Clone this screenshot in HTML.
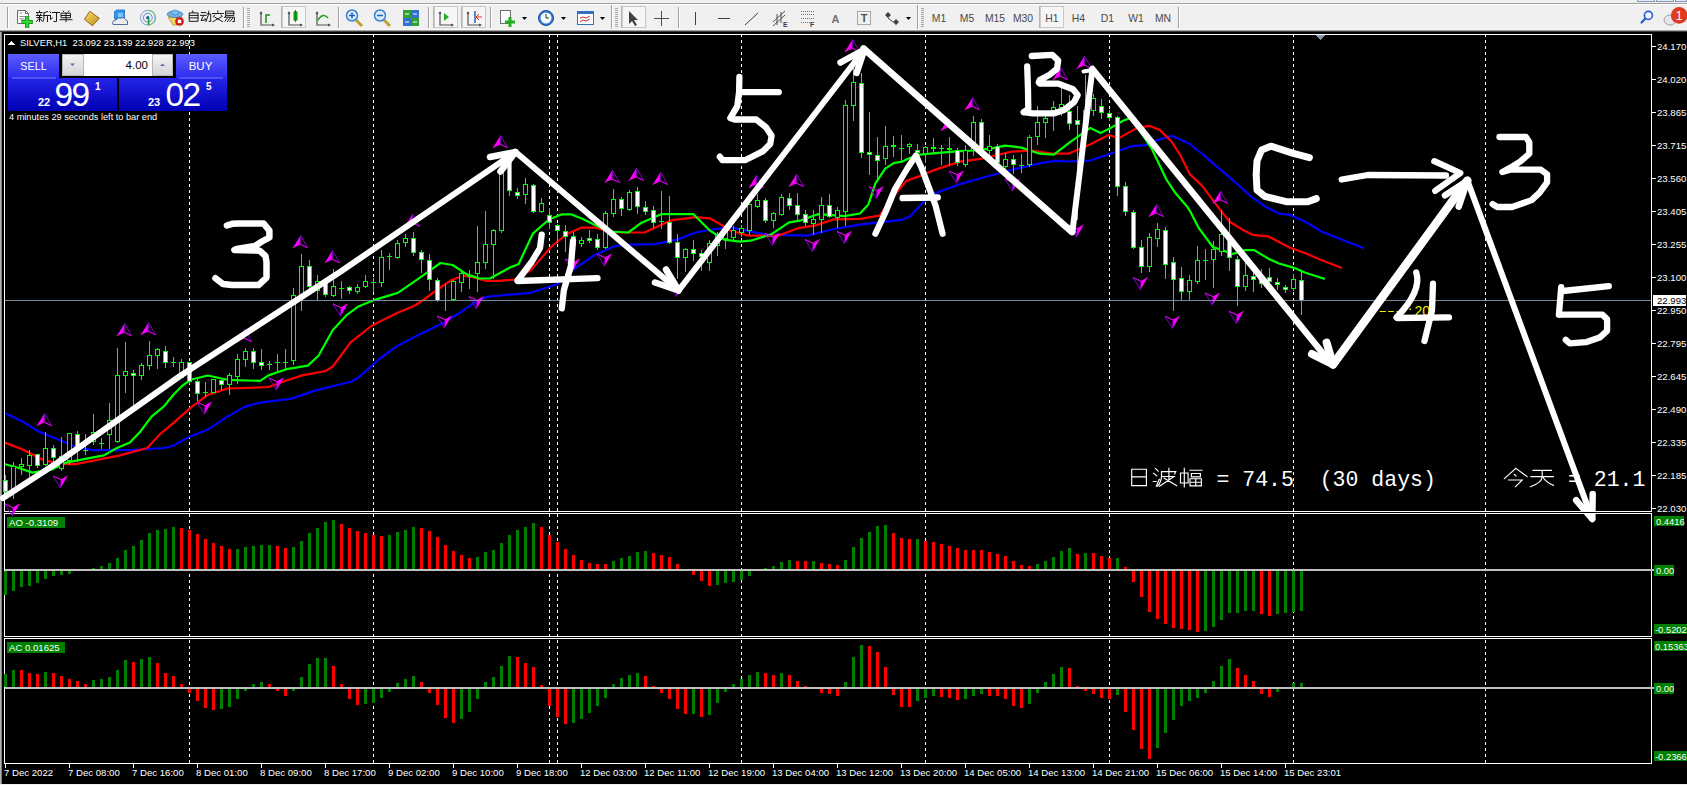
<!DOCTYPE html>
<html><head><meta charset="utf-8"><title>MT4</title>
<style>html,body{margin:0;padding:0;background:#000;overflow:hidden}svg{display:block}text{font-family:"Liberation Sans",sans-serif}.mono{font-family:"Liberation Mono",monospace}</style></head>
<body><svg width="1687" height="785" viewBox="0 0 1687 785">
<rect x="0" y="0" width="1687" height="3" fill="#f0f0f0"/>
<rect x="1637.5" y="-1" width="17" height="2.5" fill="#dcecfc" stroke="#8a9aaa" stroke-width="1"/>
<rect x="1656.5" y="-1" width="17" height="2.5" fill="#dcecfc" stroke="#8a9aaa" stroke-width="1"/>
<rect x="1675.5" y="-1" width="11" height="2.5" fill="#dcecfc" stroke="#8a9aaa" stroke-width="1"/>
<rect x="0" y="3" width="1687" height="1" fill="#a0a0a0"/>
<rect x="0" y="4" width="1687" height="1" fill="#ffffff"/>
<rect x="0" y="5" width="1687" height="24" fill="#f0f0f0"/>
<rect x="0" y="29" width="1687" height="1" fill="#f8f8f8"/>
<rect x="0" y="30" width="1687" height="1" fill="#a0a0a0"/>
<rect x="0" y="31" width="1687" height="1" fill="#404040"/>
<rect x="7" y="7" width="1" height="21" fill="#a0a0a0"/><rect x="8" y="7" width="1" height="21" fill="#ffffff"/>
<rect x="243" y="7" width="1" height="21" fill="#a0a0a0"/><rect x="244" y="7" width="1" height="21" fill="#ffffff"/>
<rect x="338" y="7" width="1" height="21" fill="#a0a0a0"/><rect x="339" y="7" width="1" height="21" fill="#ffffff"/>
<rect x="428" y="7" width="1" height="21" fill="#a0a0a0"/><rect x="429" y="7" width="1" height="21" fill="#ffffff"/>
<rect x="490" y="7" width="1" height="21" fill="#a0a0a0"/><rect x="491" y="7" width="1" height="21" fill="#ffffff"/>
<rect x="678" y="7" width="1" height="21" fill="#a0a0a0"/><rect x="679" y="7" width="1" height="21" fill="#ffffff"/>
<rect x="1178" y="7" width="1" height="21" fill="#a0a0a0"/><rect x="1179" y="7" width="1" height="21" fill="#ffffff"/>
<rect x="611" y="5" width="1" height="24" fill="#a0a0a0"/><rect x="612" y="5" width="1" height="24" fill="#ffffff"/>
<rect x="917" y="5" width="1" height="24" fill="#a0a0a0"/><rect x="918" y="5" width="1" height="24" fill="#ffffff"/>
<rect x="247" y="8" width="3" height="1" fill="#a8a8a8"/>
<rect x="247" y="10" width="3" height="1" fill="#a8a8a8"/>
<rect x="247" y="12" width="3" height="1" fill="#a8a8a8"/>
<rect x="247" y="14" width="3" height="1" fill="#a8a8a8"/>
<rect x="247" y="16" width="3" height="1" fill="#a8a8a8"/>
<rect x="247" y="18" width="3" height="1" fill="#a8a8a8"/>
<rect x="247" y="20" width="3" height="1" fill="#a8a8a8"/>
<rect x="247" y="22" width="3" height="1" fill="#a8a8a8"/>
<rect x="247" y="24" width="3" height="1" fill="#a8a8a8"/>
<rect x="247" y="26" width="3" height="1" fill="#a8a8a8"/>
<rect x="615" y="8" width="3" height="1" fill="#a8a8a8"/>
<rect x="615" y="10" width="3" height="1" fill="#a8a8a8"/>
<rect x="615" y="12" width="3" height="1" fill="#a8a8a8"/>
<rect x="615" y="14" width="3" height="1" fill="#a8a8a8"/>
<rect x="615" y="16" width="3" height="1" fill="#a8a8a8"/>
<rect x="615" y="18" width="3" height="1" fill="#a8a8a8"/>
<rect x="615" y="20" width="3" height="1" fill="#a8a8a8"/>
<rect x="615" y="22" width="3" height="1" fill="#a8a8a8"/>
<rect x="615" y="24" width="3" height="1" fill="#a8a8a8"/>
<rect x="615" y="26" width="3" height="1" fill="#a8a8a8"/>
<rect x="921" y="8" width="3" height="1" fill="#a8a8a8"/>
<rect x="921" y="10" width="3" height="1" fill="#a8a8a8"/>
<rect x="921" y="12" width="3" height="1" fill="#a8a8a8"/>
<rect x="921" y="14" width="3" height="1" fill="#a8a8a8"/>
<rect x="921" y="16" width="3" height="1" fill="#a8a8a8"/>
<rect x="921" y="18" width="3" height="1" fill="#a8a8a8"/>
<rect x="921" y="20" width="3" height="1" fill="#a8a8a8"/>
<rect x="921" y="22" width="3" height="1" fill="#a8a8a8"/>
<rect x="921" y="24" width="3" height="1" fill="#a8a8a8"/>
<rect x="921" y="26" width="3" height="1" fill="#a8a8a8"/>
<rect x="281.5" y="6.5" width="24" height="21" fill="#f6f6f6" stroke="#c8c8c8" stroke-width="1"/>
<rect x="281.5" y="6.5" width="1" height="21" fill="#a0a0a0"/>
<rect x="433.5" y="6.5" width="24" height="21" fill="#f6f6f6" stroke="#c8c8c8" stroke-width="1"/>
<rect x="433.5" y="6.5" width="1" height="21" fill="#a0a0a0"/>
<rect x="461.5" y="6.5" width="24" height="21" fill="#f6f6f6" stroke="#c8c8c8" stroke-width="1"/>
<rect x="461.5" y="6.5" width="1" height="21" fill="#a0a0a0"/>
<rect x="621.5" y="6.5" width="24" height="21" fill="#f6f6f6" stroke="#c8c8c8" stroke-width="1"/>
<rect x="621.5" y="6.5" width="1" height="21" fill="#a0a0a0"/>
<rect x="1039.5" y="6.5" width="24" height="21" fill="#f6f6f6" stroke="#c8c8c8" stroke-width="1"/>
<rect x="1039.5" y="6.5" width="1" height="21" fill="#a0a0a0"/>
<text x="939" y="22" font-size="10.4" text-anchor="middle" fill="#4a4a4a">M1</text>
<text x="967" y="22" font-size="10.4" text-anchor="middle" fill="#4a4a4a">M5</text>
<text x="995" y="22" font-size="10.4" text-anchor="middle" fill="#4a4a4a">M15</text>
<text x="1023" y="22" font-size="10.4" text-anchor="middle" fill="#4a4a4a">M30</text>
<text x="1052" y="22" font-size="10.4" text-anchor="middle" fill="#4a4a4a">H1</text>
<text x="1078.5" y="22" font-size="10.4" text-anchor="middle" fill="#4a4a4a">H4</text>
<text x="1107.5" y="22" font-size="10.4" text-anchor="middle" fill="#4a4a4a">D1</text>
<text x="1136" y="22" font-size="10.4" text-anchor="middle" fill="#4a4a4a">W1</text>
<text x="1163" y="22" font-size="10.4" text-anchor="middle" fill="#4a4a4a">MN</text>
<path d="M17.5 10.5h8l3 3v10h-11z" fill="#fafafa" stroke="#6a6a6a"/><path d="M25.5 10.5v3h3" fill="none" stroke="#6a6a6a"/>
<path d="M19.5 13h2.5M19.5 16.5h6M19.5 19h5" stroke="#8a8a8a"/>
<path d="M27.1 16.3v11.4M21.4 22h11.4" stroke="#0f8a0f" stroke-width="4.2"/><path d="M27.1 17v10M22 22h10" stroke="#34d834" stroke-width="2.4"/>
<defs><linearGradient id="gbook" x1="0" y1="0" x2="1" y2="1"><stop offset="0" stop-color="#f8e070"/><stop offset="1" stop-color="#c08a18"/></linearGradient></defs>
<path d="M84.4 19.3 L89.8 11.3 L99.4 18.3 L92.4 25.7 Z" fill="url(#gbook)" stroke="#8a5a10" stroke-width="0.9"/>
<path d="M114.5 11.5l2-1.5h8v9h-10z" fill="#2a9af0" stroke="#1a6ac0" stroke-width="0.8"/><path d="M118 14h5M118 16h5" stroke="#d8f0ff"/>
<path d="M113 24.5 q-1.5 -4 3 -4.5 q1.5 -3 5 -2 q3 -1.5 4.5 1.5 q3 0.5 2 5z" fill="#e8ecf4" stroke="#4a5a8a" stroke-width="0.9"/>
<circle cx="147.8" cy="17.7" r="7.3" fill="none" stroke="#7aa0e0" stroke-width="1"/><circle cx="147.8" cy="17.7" r="4.4" fill="none" stroke="#5a88d8" stroke-width="1"/><path d="M148 10.4 a7.3 7.3 0 0 1 0.6 14.6" fill="none" stroke="#80c080" stroke-width="1.2"/><circle cx="147.8" cy="17.7" r="1.6" fill="#2050c0"/><path d="M148.6 18v7.2" stroke="#20a020" stroke-width="1.6"/>
<path d="M168 17 h14 l-5 8 h-4z" fill="#f0d860" stroke="#b09020" stroke-width="0.8"/><ellipse cx="175" cy="14.3" rx="7.8" ry="3.2" fill="#70b0e8" stroke="#3a78b8" stroke-width="0.8"/><ellipse cx="175" cy="12.5" rx="3.5" ry="2.5" fill="#80c0f0" stroke="#3a78b8" stroke-width="0.6"/><circle cx="179.5" cy="21.4" r="4" fill="#d82010" stroke="#a01008" stroke-width="0.6"/><rect x="177.8" y="19.7" width="3.4" height="3.4" fill="#fff"/>
<path d="M261 12v13h13" fill="none" stroke="#505050" stroke-width="1.2"/><path d="M259.5 14l1.5-3 1.5 3M272 23.5l3 1.5-3 1.5" fill="#505050"/><path d="M266 23v-8h4" stroke="#109010" stroke-width="1.5" fill="none"/>
<path d="M289 12v13h13" fill="none" stroke="#505050" stroke-width="1.2"/><path d="M287.5 14l1.5-3 1.5 3M300 23.5l3 1.5-3 1.5" fill="#505050"/><rect x="294" y="12" width="3" height="8" fill="#20c020" stroke="#108010"/><path d="M295.5 10v12" stroke="#108010"/>
<path d="M317 12v13h13" fill="none" stroke="#505050" stroke-width="1.2"/><path d="M315.5 14l1.5-3 1.5 3M328 23.5l3 1.5-3 1.5" fill="#505050"/><path d="M318 20 q5 -8 10 -2" stroke="#20a020" stroke-width="1.5" fill="none"/>
<path d="M356 20 l6 6" stroke="#c0a030" stroke-width="3"/>
<circle cx="352" cy="15.5" r="5.5" fill="#d8ecfc" stroke="#3a80d0" stroke-width="1.5"/>
<path d="M349 15.5h6" stroke="#2060b0" stroke-width="1.5"/>
<path d="M352 12.5v6" stroke="#2060b0" stroke-width="1.5"/>
<path d="M384 20 l6 6" stroke="#c0a030" stroke-width="3"/>
<circle cx="380" cy="15.5" r="5.5" fill="#d8ecfc" stroke="#3a80d0" stroke-width="1.5"/>
<path d="M377 15.5h6" stroke="#2060b0" stroke-width="1.5"/>
<rect x="403" y="10" width="8" height="8" fill="#30a030"/><rect x="411" y="10" width="8" height="8" fill="#3070d0"/><rect x="403" y="18" width="8" height="8" fill="#3070d0"/><rect x="411" y="18" width="8" height="8" fill="#30a030"/>
<path d="M405 14h4M413 14h4M405 22h4M413 22h4" stroke="#fff"/>
<path d="M440 12v13h13" fill="none" stroke="#505050" stroke-width="1.2"/><path d="M438.5 14l1.5-3 1.5 3M451 23.5l3 1.5-3 1.5" fill="#505050"/><path d="M444 13 l5 4 -5 4z" fill="#20b020"/>
<path d="M468 12v13h13" fill="none" stroke="#505050" stroke-width="1.2"/><path d="M466.5 14l1.5-3 1.5 3M479 23.5l3 1.5-3 1.5" fill="#505050"/><path d="M475 11v12" stroke="#2060c0" stroke-width="1.5"/><path d="M482 17 h-5 M479 14 l-3 3 3 3" stroke="#e03010" fill="none"/>
<rect x="500.5" y="10.5" width="10" height="13" fill="#fafafa" stroke="#707070"/><path d="M510 17v10M505 22h10" stroke="#20b020" stroke-width="3"/>
<path d="M522 17h5l-2.5 3z" fill="#000"/>
<circle cx="546" cy="18" r="7.5" fill="#2a7ad8" stroke="#1a4a98"/><circle cx="546" cy="18" r="5.5" fill="#fafafa"/><path d="M546 14v4h3" stroke="#333" fill="none"/>
<path d="M561 17h5l-2.5 3z" fill="#000"/>
<rect x="577.5" y="11.5" width="16" height="13" fill="#fff" stroke="#3070c0"/><rect x="578" y="12" width="15" height="2" fill="#3070c0"/><path d="M580 18l3-1 3 1 4-2M580 22l3-2 3 1 4-2" stroke="#c03030" fill="none"/>
<path d="M600 17h5l-2.5 3z" fill="#000"/>
<path d="M629 11 v13 l3-3 3 5 2-1 -3-5 4 0z" fill="#404040"/>
<path d="M654 18.5h15M661.5 11v15" stroke="#505050"/>
<path d="M695.5 12v13" stroke="#404040"/>
<path d="M718 18.5h12" stroke="#404040"/>
<path d="M745 25 l13-12" stroke="#404040"/>
<path d="M773 22 l12-11 M773 26 l12-11 M777 14v11 M781 12v11" stroke="#505050"/><text x="783" y="27" font-size="7" font-weight="bold" fill="#404040">E</text>
<path d="M801 11.5h13M801 14.5h13M801 18.5h13M801 22.5h10" stroke="#707070" stroke-dasharray="1 1"/><text x="810" y="27" font-size="7" font-weight="bold" fill="#404040">F</text>
<text x="835.5" y="23" font-size="11" font-weight="bold" text-anchor="middle" fill="#707070">A</text>
<rect x="857.5" y="11.5" width="13" height="13" fill="none" stroke="#606060" stroke-dasharray="1 1"/><text x="864" y="22" font-size="11" font-weight="bold" text-anchor="middle" fill="#505050">T</text>
<path d="M885 15l3-3 3 3-3 3zM893 22l3-3 3 3-3 3z" fill="#404040"/><path d="M888 18l5 4" stroke="#404040"/>
<path d="M906 17h5l-2.5 3z" fill="#000"/>
<circle cx="1648.4" cy="15.4" r="4" fill="#f4f6ff" stroke="#2a5ad0" stroke-width="1.6"/><path d="M1645.5 18.5 l-4 4" stroke="#2a5ad0" stroke-width="2.2" stroke-linecap="round"/>
<ellipse cx="1670" cy="20" rx="6" ry="5" fill="#e4e4ea" stroke="#a0a0a0"/><circle cx="1679.2" cy="15.4" r="8.3" fill="#e03a20"/><text x="1679" y="20" font-size="12" text-anchor="middle" fill="#fff" font-family="'Liberation Serif', serif">1</text>
<g stroke="#1a1a1a" stroke-width="1" fill="none" stroke-linecap="square">
<path d="M39.5 11v1.2M36.5 12.5h5.5M37.5 13.8l.6 1M41 13.8l-.6 1M36.5 15.5h5.5M36.8 17.5h5M39.5 15.5v6M39 18.5l-2.5 3M40 18.5l2 2.5"/>
<path d="M47.5 11.5l-3.5 1.3M44 12.8v5.5l-1 3M43.5 15.5h6.5M47.5 15.5v6"/>
<path d="M50 11.8l.8 1M50.5 15.5v4l1.8-1.5M52.5 12.5h7M56.5 12.5v9h-2.5"/>
<path d="M63 11l.8 1M69 11l-.8 1M61.5 13.2h9v4.5h-9zM61.5 15.5h9M66 13.2v8.5M60 19.7h12"/>
<path d="M192.5 11l.5 1.5M189.7 12.9h8.3v8.4h-8.3zM189.7 15.4h8.3M189.7 17.9h8.3"/>
<path d="M201.4 12.6h4.3M200.5 15.4h5.5M203.3 16l-2.2 4.6l4.5-.8M205 18.5l.8 1.5M207 13.9h3.7v7.5h-1.5M208.8 11.2l-.5 4-2.3 6.2"/>
<path d="M217.8 11v1.2M212.5 13.5h10.8M214.5 15l-1 1.3M221 15l1 1.3M214 16.8l8.5 4.8M221.5 16.8l-8.5 4.8"/>
<path d="M226 11.1h7.8v4.3h-7.8zM226 13.2h7.8M226.5 15.4l-1.7 2M224.8 17.2h9.6v4.4h-1.5M228 17.2l-3 4M230.5 17.5l-3 4M233 17.8l-3 3.7"/>
</g>
<rect x="0" y="32" width="1687" height="753" fill="#000"/>
<rect x="0" y="32" width="1" height="753" fill="#b0b0b0"/><rect x="1" y="32" width="1" height="753" fill="#808080"/><rect x="0" y="784" width="1687" height="1" fill="#f0f0f0"/>
<rect x="4.5" y="34.5" width="1647" height="477" fill="none" stroke="#fff" stroke-width="1"/>
<rect x="4.5" y="513.5" width="1647" height="123" fill="none" stroke="#fff" stroke-width="1"/>
<rect x="4.5" y="638.5" width="1647" height="125" fill="none" stroke="#fff" stroke-width="1"/>
<g shape-rendering="crispEdges"><line x1="189.5" y1="35" x2="189.5" y2="511" stroke="#fff" stroke-width="1" stroke-dasharray="3 3" stroke-dashoffset="1"/>
<line x1="189.5" y1="514" x2="189.5" y2="636" stroke="#fff" stroke-width="1" stroke-dasharray="3 3" stroke-dashoffset="0"/>
<line x1="189.5" y1="639" x2="189.5" y2="763" stroke="#fff" stroke-width="1" stroke-dasharray="3 3" stroke-dashoffset="5"/>
<line x1="373.5" y1="35" x2="373.5" y2="511" stroke="#fff" stroke-width="1" stroke-dasharray="3 3" stroke-dashoffset="1"/>
<line x1="373.5" y1="514" x2="373.5" y2="636" stroke="#fff" stroke-width="1" stroke-dasharray="3 3" stroke-dashoffset="0"/>
<line x1="373.5" y1="639" x2="373.5" y2="763" stroke="#fff" stroke-width="1" stroke-dasharray="3 3" stroke-dashoffset="5"/>
<line x1="549.5" y1="35" x2="549.5" y2="511" stroke="#fff" stroke-width="1" stroke-dasharray="3 3" stroke-dashoffset="1"/>
<line x1="549.5" y1="514" x2="549.5" y2="636" stroke="#fff" stroke-width="1" stroke-dasharray="3 3" stroke-dashoffset="0"/>
<line x1="549.5" y1="639" x2="549.5" y2="763" stroke="#fff" stroke-width="1" stroke-dasharray="3 3" stroke-dashoffset="5"/>
<line x1="557.5" y1="35" x2="557.5" y2="511" stroke="#fff" stroke-width="1" stroke-dasharray="3 3" stroke-dashoffset="1"/>
<line x1="557.5" y1="514" x2="557.5" y2="636" stroke="#fff" stroke-width="1" stroke-dasharray="3 3" stroke-dashoffset="0"/>
<line x1="557.5" y1="639" x2="557.5" y2="763" stroke="#fff" stroke-width="1" stroke-dasharray="3 3" stroke-dashoffset="5"/>
<line x1="741.5" y1="35" x2="741.5" y2="511" stroke="#fff" stroke-width="1" stroke-dasharray="3 3" stroke-dashoffset="1"/>
<line x1="741.5" y1="514" x2="741.5" y2="636" stroke="#fff" stroke-width="1" stroke-dasharray="3 3" stroke-dashoffset="0"/>
<line x1="741.5" y1="639" x2="741.5" y2="763" stroke="#fff" stroke-width="1" stroke-dasharray="3 3" stroke-dashoffset="5"/>
<line x1="925.5" y1="35" x2="925.5" y2="511" stroke="#fff" stroke-width="1" stroke-dasharray="3 3" stroke-dashoffset="1"/>
<line x1="925.5" y1="514" x2="925.5" y2="636" stroke="#fff" stroke-width="1" stroke-dasharray="3 3" stroke-dashoffset="0"/>
<line x1="925.5" y1="639" x2="925.5" y2="763" stroke="#fff" stroke-width="1" stroke-dasharray="3 3" stroke-dashoffset="5"/>
<line x1="1109.5" y1="35" x2="1109.5" y2="511" stroke="#fff" stroke-width="1" stroke-dasharray="3 3" stroke-dashoffset="1"/>
<line x1="1109.5" y1="514" x2="1109.5" y2="636" stroke="#fff" stroke-width="1" stroke-dasharray="3 3" stroke-dashoffset="0"/>
<line x1="1109.5" y1="639" x2="1109.5" y2="763" stroke="#fff" stroke-width="1" stroke-dasharray="3 3" stroke-dashoffset="5"/>
<line x1="1293.5" y1="35" x2="1293.5" y2="511" stroke="#fff" stroke-width="1" stroke-dasharray="3 3" stroke-dashoffset="1"/>
<line x1="1293.5" y1="514" x2="1293.5" y2="636" stroke="#fff" stroke-width="1" stroke-dasharray="3 3" stroke-dashoffset="0"/>
<line x1="1293.5" y1="639" x2="1293.5" y2="763" stroke="#fff" stroke-width="1" stroke-dasharray="3 3" stroke-dashoffset="5"/>
<line x1="1485.5" y1="35" x2="1485.5" y2="511" stroke="#fff" stroke-width="1" stroke-dasharray="3 3" stroke-dashoffset="1"/>
<line x1="1485.5" y1="514" x2="1485.5" y2="636" stroke="#fff" stroke-width="1" stroke-dasharray="3 3" stroke-dashoffset="0"/>
<line x1="1485.5" y1="639" x2="1485.5" y2="763" stroke="#fff" stroke-width="1" stroke-dasharray="3 3" stroke-dashoffset="5"/></g>
<g clip-path="url(#cmain)">
<path d="M5.0 413.2 L21.6 420.9 L39.0 431.7 L60.6 440.4 L75.8 447.0 L93.0 450.2 L130.0 450.2 L164.5 448.0 L173.2 445.8 L188.3 437.2 L207.8 429.6 L227.3 416.6 L244.6 406.9 L260.0 402.6 L291.7 398.6 L314.9 390.6 L350.6 381.7 L357.7 378.1 L380.0 358.5 L396.6 346.4 L418.2 335.0 L441.1 324.1 L459.0 313.3 L475.5 301.8 L487.0 296.8 L500.0 295.5 L530.7 292.8 L558.2 283.8 L575.0 268.3 L594.6 255.0 L615.0 246.0 L630.4 244.7 L654.8 244.1 L677.2 239.6 L695.6 232.5 L711.9 229.5 L730.0 227.4 L766.7 234.6 L807.4 235.6 L831.9 229.5 L860.0 224.7 L876.8 222.6 L902.0 219.8 L910.4 216.3 L923.0 202.3 L937.0 192.5 L960.0 184.1 L980.6 178.2 L1011.1 170.0 L1041.7 162.9 L1056.0 160.9 L1070.0 161.5 L1090.4 160.5 L1114.8 152.3 L1131.1 146.2 L1145.4 145.2 L1157.6 140.1 L1171.7 135.7 L1189.0 143.5 L1202.2 153.8 L1220.6 169.8 L1235.9 182.8 L1251.2 196.6 L1266.5 207.3 L1278.7 213.4 L1290.0 215.0 L1305.5 221.8 L1322.3 232.0 L1364.0 248.3" fill="none" stroke="#0000ff" stroke-width="2.2" stroke-linejoin="round"/>
<path d="M5.0 442.6 L21.6 449.0 L43.3 459.9 L60.6 464.2 L75.8 464.2 L97.4 459.9 L119.0 455.6 L147.2 448.0 L160.2 434.0 L173.2 423.1 L190.5 407.9 L207.8 394.9 L227.3 388.5 L260.0 387.4 L268.5 387.0 L282.8 381.7 L302.4 375.4 L325.6 371.0 L332.8 366.5 L350.6 342.4 L372.0 325.5 L380.0 321.6 L396.6 313.3 L414.4 305.7 L423.3 300.0 L437.3 289.7 L451.3 280.2 L462.8 275.7 L471.7 277.0 L485.7 280.8 L500.0 280.8 L514.4 279.6 L530.7 270.4 L551.0 247.0 L567.4 233.7 L581.7 227.6 L596.0 227.6 L608.2 231.7 L622.2 232.5 L644.6 232.5 L671.1 220.3 L695.6 217.2 L709.8 218.3 L724.1 226.4 L730.0 230.5 L748.3 235.6 L778.9 235.6 L797.2 228.4 L815.6 225.4 L833.9 219.3 L860.0 218.8 L879.6 215.6 L893.6 196.0 L906.2 181.0 L918.8 176.4 L934.2 170.1 L946.8 165.9 L960.0 161.7 L980.6 158.8 L1011.1 151.7 L1031.5 150.7 L1051.9 153.7 L1068.2 153.7 L1090.4 144.2 L1108.7 135.0 L1118.9 138.1 L1137.2 127.9 L1149.5 125.8 L1159.6 129.9 L1171.5 141.5 L1180.0 154.6 L1190.0 174.4 L1202.2 185.9 L1211.4 198.1 L1220.6 210.3 L1229.8 221.8 L1243.5 230.2 L1252.7 234.8 L1268.0 236.3 L1290.0 247.8 L1305.5 253.3 L1320.0 259.4 L1342.0 268.0" fill="none" stroke="#ff0000" stroke-width="2.2" stroke-linejoin="round"/>
<path d="M5.0 464.3 L17.3 467.5 L32.5 472.6 L52.0 469.4 L65.0 462.9 L86.6 458.6 L103.9 455.4 L116.9 448.0 L129.9 442.6 L140.0 432.0 L151.5 416.6 L164.5 405.8 L173.2 395.0 L182.0 386.0 L190.5 379.8 L207.8 375.5 L227.3 379.8 L260.0 380.9 L268.5 375.4 L286.4 369.2 L307.8 365.6 L318.5 355.8 L332.8 330.0 L347.0 314.8 L357.7 306.8 L375.6 299.6 L397.8 292.9 L418.2 278.9 L440.4 263.0 L452.6 265.0 L466.9 274.3 L479.0 278.4 L490.0 278.5 L510.4 267.3 L518.5 264.3 L532.8 233.7 L549.0 219.5 L561.3 214.4 L571.5 214.4 L581.7 218.4 L596.0 225.6 L610.0 231.5 L628.3 232.5 L640.6 223.3 L661.0 214.2 L693.5 214.2 L709.8 230.5 L724.1 239.6 L740.0 241.7 L750.4 240.7 L770.7 234.6 L789.1 222.3 L801.3 220.3 L817.6 214.2 L831.9 215.2 L844.1 216.2 L860.0 213.5 L868.4 204.4 L875.4 183.4 L885.2 168.7 L893.6 163.1 L902.0 161.7 L909.0 158.2 L920.2 154.7 L932.8 153.3 L960.0 151.2 L970.4 150.7 L990.7 148.6 L1005.0 145.6 L1021.3 147.6 L1039.6 153.7 L1053.9 154.7 L1070.0 142.1 L1090.4 127.9 L1100.6 133.0 L1110.7 127.9 L1123.0 120.7 L1131.1 117.7 L1151.5 148.3 L1166.7 180.0 L1174.8 192.2 L1187.0 206.5 L1190.0 211.1 L1199.2 228.7 L1212.9 247.0 L1232.8 253.9 L1245.0 250.1 L1254.2 250.1 L1269.5 259.3 L1279.0 263.5 L1293.3 267.6 L1305.5 272.7 L1325.0 279.0" fill="none" stroke="#00ff00" stroke-width="2.2" stroke-linejoin="round"/>
</g>
<g clip-path="url(#cmain)" shape-rendering="crispEdges">
<rect x="5" y="475" width="1" height="23" fill="#00ff00"/>
<rect x="3" y="480" width="5" height="12" fill="#00ff00"/>
<rect x="4" y="481" width="3" height="10" fill="#ffffff"/>
<rect x="13" y="462" width="1" height="37" fill="#00ff00"/>
<rect x="11" y="466" width="5" height="25" fill="#00ff00"/>
<rect x="12" y="467" width="3" height="23" fill="#000000"/>
<rect x="21" y="458" width="1" height="17" fill="#00ff00"/>
<rect x="19" y="464" width="5" height="3" fill="#00ff00"/>
<rect x="20" y="465" width="3" height="1" fill="#000000"/>
<rect x="29" y="450" width="1" height="27" fill="#00ff00"/>
<rect x="27" y="455" width="5" height="11" fill="#00ff00"/>
<rect x="28" y="456" width="3" height="9" fill="#000000"/>
<rect x="37" y="454" width="1" height="14" fill="#00ff00"/>
<rect x="35" y="454" width="5" height="12" fill="#00ff00"/>
<rect x="36" y="455" width="3" height="10" fill="#ffffff"/>
<rect x="45" y="432" width="1" height="34" fill="#00ff00"/>
<rect x="43" y="448" width="5" height="17" fill="#00ff00"/>
<rect x="44" y="449" width="3" height="15" fill="#000000"/>
<rect x="53" y="445" width="1" height="17" fill="#00ff00"/>
<rect x="51" y="448" width="5" height="10" fill="#00ff00"/>
<rect x="52" y="449" width="3" height="8" fill="#ffffff"/>
<rect x="61" y="437" width="1" height="34" fill="#00ff00"/>
<rect x="59" y="456" width="5" height="13" fill="#00ff00"/>
<rect x="60" y="457" width="3" height="11" fill="#000000"/>
<rect x="69" y="433" width="1" height="32" fill="#00ff00"/>
<rect x="67" y="433" width="5" height="28" fill="#00ff00"/>
<rect x="68" y="434" width="3" height="26" fill="#000000"/>
<rect x="77" y="431" width="1" height="31" fill="#00ff00"/>
<rect x="75" y="434" width="5" height="13" fill="#00ff00"/>
<rect x="76" y="435" width="3" height="11" fill="#ffffff"/>
<rect x="85" y="434" width="1" height="21" fill="#00ff00"/>
<rect x="83" y="450" width="5" height="1" fill="#00ff00"/>
<rect x="93" y="414" width="1" height="31" fill="#00ff00"/>
<rect x="91" y="432" width="5" height="10" fill="#00ff00"/>
<rect x="92" y="433" width="3" height="8" fill="#000000"/>
<rect x="101" y="438" width="1" height="11" fill="#00ff00"/>
<rect x="99" y="443" width="5" height="1" fill="#00ff00"/>
<rect x="109" y="403" width="1" height="46" fill="#00ff00"/>
<rect x="107" y="420" width="5" height="15" fill="#00ff00"/>
<rect x="108" y="421" width="3" height="13" fill="#000000"/>
<rect x="117" y="348" width="1" height="95" fill="#00ff00"/>
<rect x="115" y="375" width="5" height="67" fill="#00ff00"/>
<rect x="116" y="376" width="3" height="65" fill="#000000"/>
<rect x="125" y="342" width="1" height="51" fill="#00ff00"/>
<rect x="123" y="371" width="5" height="5" fill="#00ff00"/>
<rect x="124" y="372" width="3" height="3" fill="#000000"/>
<rect x="133" y="370" width="1" height="38" fill="#00ff00"/>
<rect x="131" y="373" width="5" height="3" fill="#00ff00"/>
<rect x="132" y="374" width="3" height="1" fill="#ffffff"/>
<rect x="141" y="363" width="1" height="17" fill="#00ff00"/>
<rect x="139" y="365" width="5" height="11" fill="#00ff00"/>
<rect x="140" y="366" width="3" height="9" fill="#000000"/>
<rect x="149" y="341" width="1" height="29" fill="#00ff00"/>
<rect x="147" y="355" width="5" height="11" fill="#00ff00"/>
<rect x="148" y="356" width="3" height="9" fill="#000000"/>
<rect x="157" y="348" width="1" height="21" fill="#00ff00"/>
<rect x="155" y="349" width="5" height="7" fill="#00ff00"/>
<rect x="156" y="350" width="3" height="5" fill="#000000"/>
<rect x="165" y="346" width="1" height="22" fill="#00ff00"/>
<rect x="163" y="351" width="5" height="12" fill="#00ff00"/>
<rect x="164" y="352" width="3" height="10" fill="#ffffff"/>
<rect x="173" y="357" width="1" height="10" fill="#00ff00"/>
<rect x="171" y="362" width="5" height="1" fill="#00ff00"/>
<rect x="181" y="359" width="1" height="19" fill="#00ff00"/>
<rect x="179" y="362" width="5" height="16" fill="#00ff00"/>
<rect x="180" y="363" width="3" height="14" fill="#000000"/>
<rect x="189" y="362" width="1" height="22" fill="#00ff00"/>
<rect x="187" y="362" width="5" height="20" fill="#00ff00"/>
<rect x="188" y="363" width="3" height="18" fill="#ffffff"/>
<rect x="197" y="377" width="1" height="24" fill="#00ff00"/>
<rect x="195" y="381" width="5" height="13" fill="#00ff00"/>
<rect x="196" y="382" width="3" height="11" fill="#ffffff"/>
<rect x="205" y="382" width="1" height="15" fill="#00ff00"/>
<rect x="203" y="392" width="5" height="1" fill="#00ff00"/>
<rect x="213" y="379" width="1" height="14" fill="#00ff00"/>
<rect x="211" y="379" width="5" height="14" fill="#00ff00"/>
<rect x="212" y="380" width="3" height="12" fill="#000000"/>
<rect x="221" y="378" width="1" height="12" fill="#00ff00"/>
<rect x="219" y="380" width="5" height="5" fill="#00ff00"/>
<rect x="220" y="381" width="3" height="3" fill="#ffffff"/>
<rect x="229" y="373" width="1" height="22" fill="#00ff00"/>
<rect x="227" y="375" width="5" height="10" fill="#00ff00"/>
<rect x="228" y="376" width="3" height="8" fill="#000000"/>
<rect x="237" y="354" width="1" height="30" fill="#00ff00"/>
<rect x="235" y="359" width="5" height="18" fill="#00ff00"/>
<rect x="236" y="360" width="3" height="16" fill="#000000"/>
<rect x="245" y="348" width="1" height="19" fill="#00ff00"/>
<rect x="243" y="351" width="5" height="9" fill="#00ff00"/>
<rect x="244" y="352" width="3" height="7" fill="#000000"/>
<rect x="253" y="348" width="1" height="21" fill="#00ff00"/>
<rect x="251" y="351" width="5" height="12" fill="#00ff00"/>
<rect x="252" y="352" width="3" height="10" fill="#ffffff"/>
<rect x="261" y="349" width="1" height="21" fill="#00ff00"/>
<rect x="259" y="362" width="5" height="4" fill="#00ff00"/>
<rect x="260" y="363" width="3" height="2" fill="#ffffff"/>
<rect x="269" y="361" width="1" height="9" fill="#00ff00"/>
<rect x="267" y="364" width="5" height="1" fill="#00ff00"/>
<rect x="277" y="354" width="1" height="19" fill="#00ff00"/>
<rect x="275" y="362" width="5" height="1" fill="#00ff00"/>
<rect x="285" y="349" width="1" height="20" fill="#00ff00"/>
<rect x="283" y="362" width="5" height="1" fill="#00ff00"/>
<rect x="293" y="288" width="1" height="77" fill="#00ff00"/>
<rect x="291" y="295" width="5" height="66" fill="#00ff00"/>
<rect x="292" y="296" width="3" height="64" fill="#000000"/>
<rect x="301" y="254" width="1" height="57" fill="#00ff00"/>
<rect x="299" y="266" width="5" height="31" fill="#00ff00"/>
<rect x="300" y="267" width="3" height="29" fill="#000000"/>
<rect x="309" y="260" width="1" height="29" fill="#00ff00"/>
<rect x="307" y="266" width="5" height="21" fill="#00ff00"/>
<rect x="308" y="267" width="3" height="19" fill="#ffffff"/>
<rect x="317" y="275" width="1" height="26" fill="#00ff00"/>
<rect x="315" y="281" width="5" height="10" fill="#00ff00"/>
<rect x="316" y="282" width="3" height="8" fill="#000000"/>
<rect x="325" y="278" width="1" height="19" fill="#00ff00"/>
<rect x="323" y="283" width="5" height="12" fill="#00ff00"/>
<rect x="324" y="284" width="3" height="10" fill="#ffffff"/>
<rect x="333" y="269" width="1" height="28" fill="#00ff00"/>
<rect x="331" y="286" width="5" height="10" fill="#00ff00"/>
<rect x="332" y="287" width="3" height="8" fill="#000000"/>
<rect x="341" y="281" width="1" height="18" fill="#00ff00"/>
<rect x="339" y="288" width="5" height="1" fill="#00ff00"/>
<rect x="349" y="286" width="1" height="8" fill="#00ff00"/>
<rect x="347" y="287" width="5" height="4" fill="#00ff00"/>
<rect x="348" y="288" width="3" height="2" fill="#ffffff"/>
<rect x="357" y="284" width="1" height="10" fill="#00ff00"/>
<rect x="355" y="287" width="5" height="5" fill="#00ff00"/>
<rect x="356" y="288" width="3" height="3" fill="#000000"/>
<rect x="365" y="275" width="1" height="13" fill="#00ff00"/>
<rect x="363" y="281" width="5" height="6" fill="#00ff00"/>
<rect x="364" y="282" width="3" height="4" fill="#000000"/>
<rect x="373" y="278" width="1" height="14" fill="#00ff00"/>
<rect x="371" y="282" width="5" height="1" fill="#00ff00"/>
<rect x="381" y="250" width="1" height="37" fill="#00ff00"/>
<rect x="379" y="257" width="5" height="26" fill="#00ff00"/>
<rect x="380" y="258" width="3" height="24" fill="#000000"/>
<rect x="389" y="253" width="1" height="17" fill="#00ff00"/>
<rect x="387" y="256" width="5" height="1" fill="#00ff00"/>
<rect x="397" y="240" width="1" height="19" fill="#00ff00"/>
<rect x="395" y="243" width="5" height="15" fill="#00ff00"/>
<rect x="396" y="244" width="3" height="13" fill="#000000"/>
<rect x="405" y="234" width="1" height="13" fill="#00ff00"/>
<rect x="403" y="238" width="5" height="5" fill="#00ff00"/>
<rect x="404" y="239" width="3" height="3" fill="#000000"/>
<rect x="413" y="232" width="1" height="24" fill="#00ff00"/>
<rect x="411" y="238" width="5" height="15" fill="#00ff00"/>
<rect x="412" y="239" width="3" height="13" fill="#ffffff"/>
<rect x="421" y="250" width="1" height="23" fill="#00ff00"/>
<rect x="419" y="252" width="5" height="8" fill="#00ff00"/>
<rect x="420" y="253" width="3" height="6" fill="#ffffff"/>
<rect x="429" y="254" width="1" height="37" fill="#00ff00"/>
<rect x="427" y="260" width="5" height="20" fill="#00ff00"/>
<rect x="428" y="261" width="3" height="18" fill="#ffffff"/>
<rect x="437" y="278" width="1" height="24" fill="#00ff00"/>
<rect x="435" y="280" width="5" height="21" fill="#00ff00"/>
<rect x="436" y="281" width="3" height="19" fill="#ffffff"/>
<rect x="445" y="284" width="1" height="27" fill="#00ff00"/>
<rect x="443" y="300" width="5" height="1" fill="#00ff00"/>
<rect x="453" y="280" width="1" height="21" fill="#00ff00"/>
<rect x="451" y="281" width="5" height="19" fill="#00ff00"/>
<rect x="452" y="282" width="3" height="17" fill="#000000"/>
<rect x="461" y="270" width="1" height="22" fill="#00ff00"/>
<rect x="459" y="273" width="5" height="10" fill="#00ff00"/>
<rect x="460" y="274" width="3" height="8" fill="#000000"/>
<rect x="469" y="270" width="1" height="19" fill="#00ff00"/>
<rect x="467" y="276" width="5" height="1" fill="#00ff00"/>
<rect x="477" y="226" width="1" height="66" fill="#00ff00"/>
<rect x="475" y="262" width="5" height="12" fill="#00ff00"/>
<rect x="476" y="263" width="3" height="10" fill="#000000"/>
<rect x="485" y="211" width="1" height="58" fill="#00ff00"/>
<rect x="483" y="244" width="5" height="19" fill="#00ff00"/>
<rect x="484" y="245" width="3" height="17" fill="#000000"/>
<rect x="493" y="229" width="1" height="50" fill="#00ff00"/>
<rect x="491" y="230" width="5" height="15" fill="#00ff00"/>
<rect x="492" y="231" width="3" height="13" fill="#000000"/>
<rect x="501" y="154" width="1" height="79" fill="#00ff00"/>
<rect x="499" y="170" width="5" height="61" fill="#00ff00"/>
<rect x="500" y="171" width="3" height="59" fill="#000000"/>
<rect x="509" y="158" width="1" height="38" fill="#00ff00"/>
<rect x="507" y="162" width="5" height="29" fill="#00ff00"/>
<rect x="508" y="163" width="3" height="27" fill="#ffffff"/>
<rect x="517" y="188" width="1" height="11" fill="#00ff00"/>
<rect x="515" y="192" width="5" height="4" fill="#00ff00"/>
<rect x="516" y="193" width="3" height="2" fill="#ffffff"/>
<rect x="525" y="178" width="1" height="26" fill="#00ff00"/>
<rect x="523" y="184" width="5" height="11" fill="#00ff00"/>
<rect x="524" y="185" width="3" height="9" fill="#000000"/>
<rect x="533" y="184" width="1" height="29" fill="#00ff00"/>
<rect x="531" y="185" width="5" height="27" fill="#00ff00"/>
<rect x="532" y="186" width="3" height="25" fill="#ffffff"/>
<rect x="541" y="198" width="1" height="15" fill="#00ff00"/>
<rect x="539" y="203" width="5" height="9" fill="#00ff00"/>
<rect x="540" y="204" width="3" height="7" fill="#000000"/>
<rect x="549" y="208" width="1" height="21" fill="#00ff00"/>
<rect x="547" y="215" width="5" height="8" fill="#00ff00"/>
<rect x="548" y="216" width="3" height="6" fill="#ffffff"/>
<rect x="557" y="224" width="1" height="19" fill="#00ff00"/>
<rect x="555" y="225" width="5" height="6" fill="#00ff00"/>
<rect x="556" y="226" width="3" height="4" fill="#ffffff"/>
<rect x="565" y="225" width="1" height="27" fill="#00ff00"/>
<rect x="563" y="231" width="5" height="6" fill="#00ff00"/>
<rect x="564" y="232" width="3" height="4" fill="#ffffff"/>
<rect x="573" y="232" width="1" height="22" fill="#00ff00"/>
<rect x="571" y="236" width="5" height="9" fill="#00ff00"/>
<rect x="572" y="237" width="3" height="7" fill="#ffffff"/>
<rect x="581" y="237" width="1" height="10" fill="#00ff00"/>
<rect x="579" y="240" width="5" height="4" fill="#00ff00"/>
<rect x="580" y="241" width="3" height="2" fill="#000000"/>
<rect x="589" y="230" width="1" height="13" fill="#00ff00"/>
<rect x="587" y="238" width="5" height="3" fill="#00ff00"/>
<rect x="588" y="239" width="3" height="1" fill="#ffffff"/>
<rect x="597" y="234" width="1" height="16" fill="#00ff00"/>
<rect x="595" y="239" width="5" height="9" fill="#00ff00"/>
<rect x="596" y="240" width="3" height="7" fill="#ffffff"/>
<rect x="605" y="211" width="1" height="38" fill="#00ff00"/>
<rect x="603" y="213" width="5" height="35" fill="#00ff00"/>
<rect x="604" y="214" width="3" height="33" fill="#000000"/>
<rect x="613" y="189" width="1" height="28" fill="#00ff00"/>
<rect x="611" y="199" width="5" height="15" fill="#00ff00"/>
<rect x="612" y="200" width="3" height="13" fill="#000000"/>
<rect x="621" y="197" width="1" height="19" fill="#00ff00"/>
<rect x="619" y="199" width="5" height="10" fill="#00ff00"/>
<rect x="620" y="200" width="3" height="8" fill="#ffffff"/>
<rect x="629" y="190" width="1" height="21" fill="#00ff00"/>
<rect x="627" y="192" width="5" height="18" fill="#00ff00"/>
<rect x="628" y="193" width="3" height="16" fill="#000000"/>
<rect x="637" y="187" width="1" height="27" fill="#00ff00"/>
<rect x="635" y="191" width="5" height="16" fill="#00ff00"/>
<rect x="636" y="192" width="3" height="14" fill="#ffffff"/>
<rect x="645" y="201" width="1" height="14" fill="#00ff00"/>
<rect x="643" y="207" width="5" height="5" fill="#00ff00"/>
<rect x="644" y="208" width="3" height="3" fill="#ffffff"/>
<rect x="653" y="206" width="1" height="22" fill="#00ff00"/>
<rect x="651" y="210" width="5" height="13" fill="#00ff00"/>
<rect x="652" y="211" width="3" height="11" fill="#ffffff"/>
<rect x="661" y="191" width="1" height="38" fill="#00ff00"/>
<rect x="659" y="221" width="5" height="1" fill="#00ff00"/>
<rect x="669" y="196" width="1" height="48" fill="#00ff00"/>
<rect x="667" y="222" width="5" height="21" fill="#00ff00"/>
<rect x="668" y="223" width="3" height="19" fill="#ffffff"/>
<rect x="677" y="234" width="1" height="45" fill="#00ff00"/>
<rect x="675" y="242" width="5" height="16" fill="#00ff00"/>
<rect x="676" y="243" width="3" height="14" fill="#ffffff"/>
<rect x="685" y="248" width="1" height="24" fill="#00ff00"/>
<rect x="683" y="249" width="5" height="9" fill="#00ff00"/>
<rect x="684" y="250" width="3" height="7" fill="#000000"/>
<rect x="693" y="240" width="1" height="21" fill="#00ff00"/>
<rect x="691" y="249" width="5" height="5" fill="#00ff00"/>
<rect x="692" y="250" width="3" height="3" fill="#ffffff"/>
<rect x="701" y="250" width="1" height="21" fill="#00ff00"/>
<rect x="699" y="253" width="5" height="4" fill="#00ff00"/>
<rect x="700" y="254" width="3" height="2" fill="#ffffff"/>
<rect x="709" y="240" width="1" height="31" fill="#00ff00"/>
<rect x="707" y="243" width="5" height="20" fill="#00ff00"/>
<rect x="708" y="244" width="3" height="18" fill="#000000"/>
<rect x="717" y="232" width="1" height="24" fill="#00ff00"/>
<rect x="715" y="235" width="5" height="11" fill="#00ff00"/>
<rect x="716" y="236" width="3" height="9" fill="#000000"/>
<rect x="725" y="228" width="1" height="21" fill="#00ff00"/>
<rect x="723" y="230" width="5" height="9" fill="#00ff00"/>
<rect x="724" y="231" width="3" height="7" fill="#000000"/>
<rect x="733" y="226" width="1" height="15" fill="#00ff00"/>
<rect x="731" y="230" width="5" height="8" fill="#00ff00"/>
<rect x="732" y="231" width="3" height="6" fill="#000000"/>
<rect x="741" y="225" width="1" height="12" fill="#00ff00"/>
<rect x="739" y="228" width="5" height="5" fill="#00ff00"/>
<rect x="740" y="229" width="3" height="3" fill="#000000"/>
<rect x="749" y="204" width="1" height="31" fill="#00ff00"/>
<rect x="747" y="204" width="5" height="27" fill="#00ff00"/>
<rect x="748" y="205" width="3" height="25" fill="#000000"/>
<rect x="757" y="194" width="1" height="14" fill="#00ff00"/>
<rect x="755" y="200" width="5" height="7" fill="#00ff00"/>
<rect x="756" y="201" width="3" height="5" fill="#000000"/>
<rect x="765" y="198" width="1" height="25" fill="#00ff00"/>
<rect x="763" y="200" width="5" height="21" fill="#00ff00"/>
<rect x="764" y="201" width="3" height="19" fill="#ffffff"/>
<rect x="773" y="212" width="1" height="16" fill="#00ff00"/>
<rect x="771" y="213" width="5" height="8" fill="#00ff00"/>
<rect x="772" y="214" width="3" height="6" fill="#000000"/>
<rect x="781" y="194" width="1" height="22" fill="#00ff00"/>
<rect x="779" y="197" width="5" height="18" fill="#00ff00"/>
<rect x="780" y="198" width="3" height="16" fill="#000000"/>
<rect x="789" y="193" width="1" height="17" fill="#00ff00"/>
<rect x="787" y="198" width="5" height="8" fill="#00ff00"/>
<rect x="788" y="199" width="3" height="6" fill="#ffffff"/>
<rect x="797" y="193" width="1" height="29" fill="#00ff00"/>
<rect x="795" y="205" width="5" height="10" fill="#00ff00"/>
<rect x="796" y="206" width="3" height="8" fill="#ffffff"/>
<rect x="805" y="210" width="1" height="16" fill="#00ff00"/>
<rect x="803" y="214" width="5" height="9" fill="#00ff00"/>
<rect x="804" y="215" width="3" height="7" fill="#ffffff"/>
<rect x="813" y="210" width="1" height="25" fill="#00ff00"/>
<rect x="811" y="219" width="5" height="5" fill="#00ff00"/>
<rect x="812" y="220" width="3" height="3" fill="#000000"/>
<rect x="821" y="197" width="1" height="36" fill="#00ff00"/>
<rect x="819" y="205" width="5" height="15" fill="#00ff00"/>
<rect x="820" y="206" width="3" height="13" fill="#000000"/>
<rect x="829" y="194" width="1" height="24" fill="#00ff00"/>
<rect x="827" y="205" width="5" height="12" fill="#00ff00"/>
<rect x="828" y="206" width="3" height="10" fill="#ffffff"/>
<rect x="837" y="207" width="1" height="21" fill="#00ff00"/>
<rect x="835" y="210" width="5" height="8" fill="#00ff00"/>
<rect x="836" y="211" width="3" height="6" fill="#000000"/>
<rect x="845" y="100" width="1" height="126" fill="#00ff00"/>
<rect x="843" y="105" width="5" height="107" fill="#00ff00"/>
<rect x="844" y="106" width="3" height="105" fill="#000000"/>
<rect x="853" y="58" width="1" height="63" fill="#00ff00"/>
<rect x="851" y="82" width="5" height="24" fill="#00ff00"/>
<rect x="852" y="83" width="3" height="22" fill="#000000"/>
<rect x="861" y="73" width="1" height="85" fill="#00ff00"/>
<rect x="859" y="83" width="5" height="70" fill="#00ff00"/>
<rect x="860" y="84" width="3" height="68" fill="#ffffff"/>
<rect x="869" y="112" width="1" height="63" fill="#00ff00"/>
<rect x="867" y="152" width="5" height="3" fill="#00ff00"/>
<rect x="868" y="153" width="3" height="1" fill="#ffffff"/>
<rect x="877" y="137" width="1" height="45" fill="#00ff00"/>
<rect x="875" y="155" width="5" height="6" fill="#00ff00"/>
<rect x="876" y="156" width="3" height="4" fill="#ffffff"/>
<rect x="885" y="126" width="1" height="39" fill="#00ff00"/>
<rect x="883" y="146" width="5" height="13" fill="#00ff00"/>
<rect x="884" y="147" width="3" height="11" fill="#000000"/>
<rect x="893" y="136" width="1" height="21" fill="#00ff00"/>
<rect x="891" y="145" width="5" height="2" fill="#00ff00"/>
<rect x="901" y="135" width="1" height="26" fill="#00ff00"/>
<rect x="899" y="148" width="5" height="1" fill="#00ff00"/>
<rect x="909" y="143" width="1" height="11" fill="#00ff00"/>
<rect x="907" y="144" width="5" height="3" fill="#00ff00"/>
<rect x="908" y="145" width="3" height="1" fill="#000000"/>
<rect x="917" y="144" width="1" height="15" fill="#00ff00"/>
<rect x="915" y="150" width="5" height="3" fill="#00ff00"/>
<rect x="916" y="151" width="3" height="1" fill="#ffffff"/>
<rect x="925" y="146" width="1" height="17" fill="#00ff00"/>
<rect x="923" y="147" width="5" height="7" fill="#00ff00"/>
<rect x="924" y="148" width="3" height="5" fill="#000000"/>
<rect x="933" y="138" width="1" height="16" fill="#00ff00"/>
<rect x="931" y="147" width="5" height="2" fill="#00ff00"/>
<rect x="941" y="145" width="1" height="20" fill="#00ff00"/>
<rect x="939" y="148" width="5" height="1" fill="#00ff00"/>
<rect x="949" y="137" width="1" height="29" fill="#00ff00"/>
<rect x="947" y="148" width="5" height="2" fill="#00ff00"/>
<rect x="957" y="148" width="1" height="18" fill="#00ff00"/>
<rect x="955" y="150" width="5" height="13" fill="#00ff00"/>
<rect x="956" y="151" width="3" height="11" fill="#ffffff"/>
<rect x="965" y="145" width="1" height="22" fill="#00ff00"/>
<rect x="963" y="150" width="5" height="15" fill="#00ff00"/>
<rect x="964" y="151" width="3" height="13" fill="#000000"/>
<rect x="973" y="116" width="1" height="40" fill="#00ff00"/>
<rect x="971" y="122" width="5" height="29" fill="#00ff00"/>
<rect x="972" y="123" width="3" height="27" fill="#000000"/>
<rect x="981" y="119" width="1" height="34" fill="#00ff00"/>
<rect x="979" y="122" width="5" height="29" fill="#00ff00"/>
<rect x="980" y="123" width="3" height="27" fill="#ffffff"/>
<rect x="989" y="135" width="1" height="21" fill="#00ff00"/>
<rect x="987" y="146" width="5" height="5" fill="#00ff00"/>
<rect x="988" y="147" width="3" height="3" fill="#000000"/>
<rect x="997" y="144" width="1" height="21" fill="#00ff00"/>
<rect x="995" y="146" width="5" height="17" fill="#00ff00"/>
<rect x="996" y="147" width="3" height="15" fill="#ffffff"/>
<rect x="1005" y="153" width="1" height="16" fill="#00ff00"/>
<rect x="1003" y="159" width="5" height="8" fill="#00ff00"/>
<rect x="1004" y="160" width="3" height="6" fill="#000000"/>
<rect x="1013" y="155" width="1" height="19" fill="#00ff00"/>
<rect x="1011" y="159" width="5" height="6" fill="#00ff00"/>
<rect x="1012" y="160" width="3" height="4" fill="#ffffff"/>
<rect x="1021" y="154" width="1" height="19" fill="#00ff00"/>
<rect x="1019" y="165" width="5" height="1" fill="#00ff00"/>
<rect x="1029" y="135" width="1" height="32" fill="#00ff00"/>
<rect x="1027" y="137" width="5" height="28" fill="#00ff00"/>
<rect x="1028" y="138" width="3" height="26" fill="#000000"/>
<rect x="1037" y="106" width="1" height="39" fill="#00ff00"/>
<rect x="1035" y="122" width="5" height="15" fill="#00ff00"/>
<rect x="1036" y="123" width="3" height="13" fill="#000000"/>
<rect x="1045" y="112" width="1" height="26" fill="#00ff00"/>
<rect x="1043" y="118" width="5" height="5" fill="#00ff00"/>
<rect x="1044" y="119" width="3" height="3" fill="#000000"/>
<rect x="1053" y="101" width="1" height="30" fill="#00ff00"/>
<rect x="1051" y="107" width="5" height="4" fill="#00ff00"/>
<rect x="1052" y="108" width="3" height="2" fill="#000000"/>
<rect x="1061" y="86" width="1" height="30" fill="#00ff00"/>
<rect x="1059" y="104" width="5" height="4" fill="#00ff00"/>
<rect x="1060" y="105" width="3" height="2" fill="#000000"/>
<rect x="1069" y="95" width="1" height="35" fill="#00ff00"/>
<rect x="1067" y="111" width="5" height="13" fill="#00ff00"/>
<rect x="1068" y="112" width="3" height="11" fill="#ffffff"/>
<rect x="1077" y="106" width="1" height="114" fill="#00ff00"/>
<rect x="1075" y="120" width="5" height="5" fill="#00ff00"/>
<rect x="1076" y="121" width="3" height="3" fill="#ffffff"/>
<rect x="1085" y="75" width="1" height="61" fill="#00ff00"/>
<rect x="1083" y="110" width="5" height="11" fill="#00ff00"/>
<rect x="1084" y="111" width="3" height="9" fill="#000000"/>
<rect x="1093" y="94" width="1" height="22" fill="#00ff00"/>
<rect x="1091" y="98" width="5" height="13" fill="#00ff00"/>
<rect x="1092" y="99" width="3" height="11" fill="#000000"/>
<rect x="1101" y="99" width="1" height="20" fill="#00ff00"/>
<rect x="1099" y="106" width="5" height="7" fill="#00ff00"/>
<rect x="1100" y="107" width="3" height="5" fill="#ffffff"/>
<rect x="1109" y="110" width="1" height="11" fill="#00ff00"/>
<rect x="1107" y="113" width="5" height="5" fill="#00ff00"/>
<rect x="1108" y="114" width="3" height="3" fill="#ffffff"/>
<rect x="1117" y="116" width="1" height="80" fill="#00ff00"/>
<rect x="1115" y="117" width="5" height="70" fill="#00ff00"/>
<rect x="1116" y="118" width="3" height="68" fill="#ffffff"/>
<rect x="1125" y="182" width="1" height="34" fill="#00ff00"/>
<rect x="1123" y="186" width="5" height="26" fill="#00ff00"/>
<rect x="1124" y="187" width="3" height="24" fill="#ffffff"/>
<rect x="1133" y="210" width="1" height="39" fill="#00ff00"/>
<rect x="1131" y="212" width="5" height="36" fill="#00ff00"/>
<rect x="1132" y="213" width="3" height="34" fill="#ffffff"/>
<rect x="1141" y="240" width="1" height="33" fill="#00ff00"/>
<rect x="1139" y="247" width="5" height="20" fill="#00ff00"/>
<rect x="1140" y="248" width="3" height="18" fill="#ffffff"/>
<rect x="1149" y="233" width="1" height="39" fill="#00ff00"/>
<rect x="1147" y="237" width="5" height="30" fill="#00ff00"/>
<rect x="1148" y="238" width="3" height="28" fill="#000000"/>
<rect x="1157" y="223" width="1" height="24" fill="#00ff00"/>
<rect x="1155" y="229" width="5" height="10" fill="#00ff00"/>
<rect x="1156" y="230" width="3" height="8" fill="#000000"/>
<rect x="1165" y="227" width="1" height="52" fill="#00ff00"/>
<rect x="1163" y="230" width="5" height="35" fill="#00ff00"/>
<rect x="1164" y="231" width="3" height="33" fill="#ffffff"/>
<rect x="1173" y="257" width="1" height="54" fill="#00ff00"/>
<rect x="1171" y="262" width="5" height="18" fill="#00ff00"/>
<rect x="1172" y="263" width="3" height="16" fill="#ffffff"/>
<rect x="1181" y="267" width="1" height="34" fill="#00ff00"/>
<rect x="1179" y="278" width="5" height="14" fill="#00ff00"/>
<rect x="1180" y="279" width="3" height="12" fill="#ffffff"/>
<rect x="1189" y="275" width="1" height="25" fill="#00ff00"/>
<rect x="1187" y="280" width="5" height="12" fill="#00ff00"/>
<rect x="1188" y="281" width="3" height="10" fill="#000000"/>
<rect x="1197" y="246" width="1" height="38" fill="#00ff00"/>
<rect x="1195" y="260" width="5" height="22" fill="#00ff00"/>
<rect x="1196" y="261" width="3" height="20" fill="#000000"/>
<rect x="1205" y="249" width="1" height="31" fill="#00ff00"/>
<rect x="1203" y="260" width="5" height="1" fill="#00ff00"/>
<rect x="1213" y="241" width="1" height="47" fill="#00ff00"/>
<rect x="1211" y="249" width="5" height="11" fill="#00ff00"/>
<rect x="1212" y="250" width="3" height="9" fill="#000000"/>
<rect x="1221" y="210" width="1" height="46" fill="#00ff00"/>
<rect x="1219" y="234" width="5" height="18" fill="#00ff00"/>
<rect x="1220" y="235" width="3" height="16" fill="#000000"/>
<rect x="1229" y="218" width="1" height="53" fill="#00ff00"/>
<rect x="1227" y="241" width="5" height="17" fill="#00ff00"/>
<rect x="1228" y="242" width="3" height="15" fill="#ffffff"/>
<rect x="1237" y="256" width="1" height="50" fill="#00ff00"/>
<rect x="1235" y="259" width="5" height="28" fill="#00ff00"/>
<rect x="1236" y="260" width="3" height="26" fill="#ffffff"/>
<rect x="1245" y="262" width="1" height="29" fill="#00ff00"/>
<rect x="1243" y="275" width="5" height="12" fill="#00ff00"/>
<rect x="1244" y="276" width="3" height="10" fill="#000000"/>
<rect x="1253" y="270" width="1" height="22" fill="#00ff00"/>
<rect x="1251" y="276" width="5" height="4" fill="#00ff00"/>
<rect x="1252" y="277" width="3" height="2" fill="#ffffff"/>
<rect x="1261" y="269" width="1" height="19" fill="#00ff00"/>
<rect x="1259" y="280" width="5" height="4" fill="#00ff00"/>
<rect x="1260" y="281" width="3" height="2" fill="#ffffff"/>
<rect x="1269" y="268" width="1" height="17" fill="#00ff00"/>
<rect x="1267" y="277" width="5" height="5" fill="#00ff00"/>
<rect x="1268" y="278" width="3" height="3" fill="#ffffff"/>
<rect x="1277" y="278" width="1" height="12" fill="#00ff00"/>
<rect x="1275" y="282" width="5" height="3" fill="#00ff00"/>
<rect x="1276" y="283" width="3" height="1" fill="#ffffff"/>
<rect x="1285" y="285" width="1" height="8" fill="#00ff00"/>
<rect x="1283" y="287" width="5" height="3" fill="#00ff00"/>
<rect x="1284" y="288" width="3" height="1" fill="#ffffff"/>
<rect x="1293" y="274" width="1" height="17" fill="#00ff00"/>
<rect x="1291" y="279" width="5" height="10" fill="#00ff00"/>
<rect x="1292" y="280" width="3" height="8" fill="#000000"/>
<rect x="1301" y="270" width="1" height="45" fill="#00ff00"/>
<rect x="1299" y="280" width="5" height="21" fill="#00ff00"/>
<rect x="1300" y="281" width="3" height="19" fill="#ffffff"/>
</g>
<g clip-path="url(#cmain)">
<path d="M44.5 413.4 L36.8 425.8 L44.1 422.2Z" fill="#ff00ff"/>
<path d="M44.5 413.4 L51.7 425.8 L44.1 422.2Z" fill="none" stroke="#8000c0" stroke-width="1"/>
<path d="M36.8 425.8 L44.1 422.2 L51.7 425.8" fill="none" stroke="#e000e0" stroke-width="1"/>
<path d="M124.5 323.4 L116.8 335.8 L124.1 332.2Z" fill="#ff00ff"/>
<path d="M124.5 323.4 L131.7 335.8 L124.1 332.2Z" fill="none" stroke="#8000c0" stroke-width="1"/>
<path d="M116.8 335.8 L124.1 332.2 L131.7 335.8" fill="none" stroke="#e000e0" stroke-width="1"/>
<path d="M148.5 322.4 L140.8 334.8 L148.1 331.2Z" fill="#ff00ff"/>
<path d="M148.5 322.4 L155.7 334.8 L148.1 331.2Z" fill="none" stroke="#8000c0" stroke-width="1"/>
<path d="M140.8 334.8 L148.1 331.2 L155.7 334.8" fill="none" stroke="#e000e0" stroke-width="1"/>
<path d="M244.5 329.2 L236.8 341.6 L244.1 338.0Z" fill="#ff00ff"/>
<path d="M244.5 329.2 L251.7 341.6 L244.1 338.0Z" fill="none" stroke="#8000c0" stroke-width="1"/>
<path d="M236.8 341.6 L244.1 338.0 L251.7 341.6" fill="none" stroke="#e000e0" stroke-width="1"/>
<path d="M300.5 235.4 L292.8 247.8 L300.1 244.2Z" fill="#ff00ff"/>
<path d="M300.5 235.4 L307.7 247.8 L300.1 244.2Z" fill="none" stroke="#8000c0" stroke-width="1"/>
<path d="M292.8 247.8 L300.1 244.2 L307.7 247.8" fill="none" stroke="#e000e0" stroke-width="1"/>
<path d="M332.5 250.4 L324.8 262.8 L332.1 259.2Z" fill="#ff00ff"/>
<path d="M332.5 250.4 L339.7 262.8 L332.1 259.2Z" fill="none" stroke="#8000c0" stroke-width="1"/>
<path d="M324.8 262.8 L332.1 259.2 L339.7 262.8" fill="none" stroke="#e000e0" stroke-width="1"/>
<path d="M412.5 213.9 L404.8 226.3 L412.1 222.7Z" fill="#ff00ff"/>
<path d="M412.5 213.9 L419.7 226.3 L412.1 222.7Z" fill="none" stroke="#8000c0" stroke-width="1"/>
<path d="M404.8 226.3 L412.1 222.7 L419.7 226.3" fill="none" stroke="#e000e0" stroke-width="1"/>
<path d="M500.5 135.4 L492.8 147.8 L500.1 144.2Z" fill="#ff00ff"/>
<path d="M500.5 135.4 L507.7 147.8 L500.1 144.2Z" fill="none" stroke="#8000c0" stroke-width="1"/>
<path d="M492.8 147.8 L500.1 144.2 L507.7 147.8" fill="none" stroke="#e000e0" stroke-width="1"/>
<path d="M612.5 170.1 L604.8 182.5 L612.1 178.9Z" fill="#ff00ff"/>
<path d="M612.5 170.1 L619.7 182.5 L612.1 178.9Z" fill="none" stroke="#8000c0" stroke-width="1"/>
<path d="M604.8 182.5 L612.1 178.9 L619.7 182.5" fill="none" stroke="#e000e0" stroke-width="1"/>
<path d="M636.5 168.1 L628.8 180.5 L636.1 176.9Z" fill="#ff00ff"/>
<path d="M636.5 168.1 L643.7 180.5 L636.1 176.9Z" fill="none" stroke="#8000c0" stroke-width="1"/>
<path d="M628.8 180.5 L636.1 176.9 L643.7 180.5" fill="none" stroke="#e000e0" stroke-width="1"/>
<path d="M660.5 172.1 L652.8 184.5 L660.1 180.9Z" fill="#ff00ff"/>
<path d="M660.5 172.1 L667.7 184.5 L660.1 180.9Z" fill="none" stroke="#8000c0" stroke-width="1"/>
<path d="M652.8 184.5 L660.1 180.9 L667.7 184.5" fill="none" stroke="#e000e0" stroke-width="1"/>
<path d="M756.5 175.2 L748.8 187.6 L756.1 184.0Z" fill="#ff00ff"/>
<path d="M756.5 175.2 L763.7 187.6 L756.1 184.0Z" fill="none" stroke="#8000c0" stroke-width="1"/>
<path d="M748.8 187.6 L756.1 184.0 L763.7 187.6" fill="none" stroke="#e000e0" stroke-width="1"/>
<path d="M796.5 174.2 L788.8 186.6 L796.1 183.0Z" fill="#ff00ff"/>
<path d="M796.5 174.2 L803.7 186.6 L796.1 183.0Z" fill="none" stroke="#8000c0" stroke-width="1"/>
<path d="M788.8 186.6 L796.1 183.0 L803.7 186.6" fill="none" stroke="#e000e0" stroke-width="1"/>
<path d="M852.5 39.4 L844.8 51.8 L852.1 48.2Z" fill="#ff00ff"/>
<path d="M852.5 39.4 L859.7 51.8 L852.1 48.2Z" fill="none" stroke="#8000c0" stroke-width="1"/>
<path d="M844.8 51.8 L852.1 48.2 L859.7 51.8" fill="none" stroke="#e000e0" stroke-width="1"/>
<path d="M948.5 118.2 L940.8 130.6 L948.1 127.0Z" fill="#ff00ff"/>
<path d="M948.5 118.2 L955.7 130.6 L948.1 127.0Z" fill="none" stroke="#8000c0" stroke-width="1"/>
<path d="M940.8 130.6 L948.1 127.0 L955.7 130.6" fill="none" stroke="#e000e0" stroke-width="1"/>
<path d="M972.5 97.4 L964.8 109.8 L972.1 106.2Z" fill="#ff00ff"/>
<path d="M972.5 97.4 L979.7 109.8 L972.1 106.2Z" fill="none" stroke="#8000c0" stroke-width="1"/>
<path d="M964.8 109.8 L972.1 106.2 L979.7 109.8" fill="none" stroke="#e000e0" stroke-width="1"/>
<path d="M1060.5 67.3 L1052.8 79.7 L1060.1 76.1Z" fill="#ff00ff"/>
<path d="M1060.5 67.3 L1067.7 79.7 L1060.1 76.1Z" fill="none" stroke="#8000c0" stroke-width="1"/>
<path d="M1052.8 79.7 L1060.1 76.1 L1067.7 79.7" fill="none" stroke="#e000e0" stroke-width="1"/>
<path d="M1084.5 56.1 L1076.8 68.5 L1084.1 64.9Z" fill="#ff00ff"/>
<path d="M1084.5 56.1 L1091.7 68.5 L1084.1 64.9Z" fill="none" stroke="#8000c0" stroke-width="1"/>
<path d="M1076.8 68.5 L1084.1 64.9 L1091.7 68.5" fill="none" stroke="#e000e0" stroke-width="1"/>
<path d="M1156.5 204.2 L1148.8 216.6 L1156.1 213.0Z" fill="#ff00ff"/>
<path d="M1156.5 204.2 L1163.7 216.6 L1156.1 213.0Z" fill="none" stroke="#8000c0" stroke-width="1"/>
<path d="M1148.8 216.6 L1156.1 213.0 L1163.7 216.6" fill="none" stroke="#e000e0" stroke-width="1"/>
<path d="M1220.5 190.9 L1212.8 203.3 L1220.1 199.7Z" fill="#ff00ff"/>
<path d="M1220.5 190.9 L1227.7 203.3 L1220.1 199.7Z" fill="none" stroke="#8000c0" stroke-width="1"/>
<path d="M1212.8 203.3 L1220.1 199.7 L1227.7 203.3" fill="none" stroke="#e000e0" stroke-width="1"/>
<path d="M12.5 516.2 L19.7 504.0 L13.0 507.7Z" fill="#ff00ff"/>
<path d="M12.5 516.2 L5.0 504.0 L13.0 507.7Z" fill="none" stroke="#8000c0" stroke-width="1"/>
<path d="M5.0 504.0 L13.0 507.7 L19.7 504.0" fill="none" stroke="#e000e0" stroke-width="1"/>
<path d="M60.5 488.2 L67.7 476.0 L61.0 479.7Z" fill="#ff00ff"/>
<path d="M60.5 488.2 L53.0 476.0 L61.0 479.7Z" fill="none" stroke="#8000c0" stroke-width="1"/>
<path d="M53.0 476.0 L61.0 479.7 L67.7 476.0" fill="none" stroke="#e000e0" stroke-width="1"/>
<path d="M204.5 414.2 L211.7 402.0 L205.0 405.7Z" fill="#ff00ff"/>
<path d="M204.5 414.2 L197.0 402.0 L205.0 405.7Z" fill="none" stroke="#8000c0" stroke-width="1"/>
<path d="M197.0 402.0 L205.0 405.7 L211.7 402.0" fill="none" stroke="#e000e0" stroke-width="1"/>
<path d="M276.5 390.1 L283.7 377.9 L277.0 381.6Z" fill="#ff00ff"/>
<path d="M276.5 390.1 L269.0 377.9 L277.0 381.6Z" fill="none" stroke="#8000c0" stroke-width="1"/>
<path d="M269.0 377.9 L277.0 381.6 L283.7 377.9" fill="none" stroke="#e000e0" stroke-width="1"/>
<path d="M340.5 316.2 L347.7 304.0 L341.0 307.7Z" fill="#ff00ff"/>
<path d="M340.5 316.2 L333.0 304.0 L341.0 307.7Z" fill="none" stroke="#8000c0" stroke-width="1"/>
<path d="M333.0 304.0 L341.0 307.7 L347.7 304.0" fill="none" stroke="#e000e0" stroke-width="1"/>
<path d="M444.5 328.2 L451.7 316.0 L445.0 319.7Z" fill="#ff00ff"/>
<path d="M444.5 328.2 L437.0 316.0 L445.0 319.7Z" fill="none" stroke="#8000c0" stroke-width="1"/>
<path d="M437.0 316.0 L445.0 319.7 L451.7 316.0" fill="none" stroke="#e000e0" stroke-width="1"/>
<path d="M476.5 308.8 L483.7 296.6 L477.0 300.3Z" fill="#ff00ff"/>
<path d="M476.5 308.8 L469.0 296.6 L477.0 300.3Z" fill="none" stroke="#8000c0" stroke-width="1"/>
<path d="M469.0 296.6 L477.0 300.3 L483.7 296.6" fill="none" stroke="#e000e0" stroke-width="1"/>
<path d="M572.5 271.2 L579.7 259.0 L573.0 262.7Z" fill="#ff00ff"/>
<path d="M572.5 271.2 L565.0 259.0 L573.0 262.7Z" fill="none" stroke="#8000c0" stroke-width="1"/>
<path d="M565.0 259.0 L573.0 262.7 L579.7 259.0" fill="none" stroke="#e000e0" stroke-width="1"/>
<path d="M604.5 266.2 L611.7 254.0 L605.0 257.7Z" fill="#ff00ff"/>
<path d="M604.5 266.2 L597.0 254.0 L605.0 257.7Z" fill="none" stroke="#8000c0" stroke-width="1"/>
<path d="M597.0 254.0 L605.0 257.7 L611.7 254.0" fill="none" stroke="#e000e0" stroke-width="1"/>
<path d="M676.5 296.6 L683.7 284.4 L677.0 288.1Z" fill="#ff00ff"/>
<path d="M676.5 296.6 L669.0 284.4 L677.0 288.1Z" fill="none" stroke="#8000c0" stroke-width="1"/>
<path d="M669.0 284.4 L677.0 288.1 L683.7 284.4" fill="none" stroke="#e000e0" stroke-width="1"/>
<path d="M772.5 245.6 L779.7 233.4 L773.0 237.1Z" fill="#ff00ff"/>
<path d="M772.5 245.6 L765.0 233.4 L773.0 237.1Z" fill="none" stroke="#8000c0" stroke-width="1"/>
<path d="M765.0 233.4 L773.0 237.1 L779.7 233.4" fill="none" stroke="#e000e0" stroke-width="1"/>
<path d="M812.5 251.7 L819.7 239.5 L813.0 243.2Z" fill="#ff00ff"/>
<path d="M812.5 251.7 L805.0 239.5 L813.0 243.2Z" fill="none" stroke="#8000c0" stroke-width="1"/>
<path d="M805.0 239.5 L813.0 243.2 L819.7 239.5" fill="none" stroke="#e000e0" stroke-width="1"/>
<path d="M844.5 243.6 L851.7 231.4 L845.0 235.1Z" fill="#ff00ff"/>
<path d="M844.5 243.6 L837.0 231.4 L845.0 235.1Z" fill="none" stroke="#8000c0" stroke-width="1"/>
<path d="M837.0 231.4 L845.0 235.1 L851.7 231.4" fill="none" stroke="#e000e0" stroke-width="1"/>
<path d="M876.5 198.8 L883.7 186.6 L877.0 190.3Z" fill="#ff00ff"/>
<path d="M876.5 198.8 L869.0 186.6 L877.0 190.3Z" fill="none" stroke="#8000c0" stroke-width="1"/>
<path d="M869.0 186.6 L877.0 190.3 L883.7 186.6" fill="none" stroke="#e000e0" stroke-width="1"/>
<path d="M956.5 183.2 L963.7 171.0 L957.0 174.7Z" fill="#ff00ff"/>
<path d="M956.5 183.2 L949.0 171.0 L957.0 174.7Z" fill="none" stroke="#8000c0" stroke-width="1"/>
<path d="M949.0 171.0 L957.0 174.7 L963.7 171.0" fill="none" stroke="#e000e0" stroke-width="1"/>
<path d="M1012.5 191.2 L1019.7 179.0 L1013.0 182.7Z" fill="#ff00ff"/>
<path d="M1012.5 191.2 L1005.0 179.0 L1013.0 182.7Z" fill="none" stroke="#8000c0" stroke-width="1"/>
<path d="M1005.0 179.0 L1013.0 182.7 L1019.7 179.0" fill="none" stroke="#e000e0" stroke-width="1"/>
<path d="M1076.5 237.2 L1083.7 225.0 L1077.0 228.7Z" fill="#ff00ff"/>
<path d="M1076.5 237.2 L1069.0 225.0 L1077.0 228.7Z" fill="none" stroke="#8000c0" stroke-width="1"/>
<path d="M1069.0 225.0 L1077.0 228.7 L1083.7 225.0" fill="none" stroke="#e000e0" stroke-width="1"/>
<path d="M1140.5 289.8 L1147.7 277.6 L1141.0 281.3Z" fill="#ff00ff"/>
<path d="M1140.5 289.8 L1133.0 277.6 L1141.0 281.3Z" fill="none" stroke="#8000c0" stroke-width="1"/>
<path d="M1133.0 277.6 L1141.0 281.3 L1147.7 277.6" fill="none" stroke="#e000e0" stroke-width="1"/>
<path d="M1172.5 328.5 L1179.7 316.3 L1173.0 320.0Z" fill="#ff00ff"/>
<path d="M1172.5 328.5 L1165.0 316.3 L1173.0 320.0Z" fill="none" stroke="#8000c0" stroke-width="1"/>
<path d="M1165.0 316.3 L1173.0 320.0 L1179.7 316.3" fill="none" stroke="#e000e0" stroke-width="1"/>
<path d="M1212.5 305.2 L1219.7 293.0 L1213.0 296.7Z" fill="#ff00ff"/>
<path d="M1212.5 305.2 L1205.0 293.0 L1213.0 296.7Z" fill="none" stroke="#8000c0" stroke-width="1"/>
<path d="M1205.0 293.0 L1213.0 296.7 L1219.7 293.0" fill="none" stroke="#e000e0" stroke-width="1"/>
<path d="M1236.5 323.5 L1243.7 311.3 L1237.0 315.0Z" fill="#ff00ff"/>
<path d="M1236.5 323.5 L1229.0 311.3 L1237.0 315.0Z" fill="none" stroke="#8000c0" stroke-width="1"/>
<path d="M1229.0 311.3 L1237.0 315.0 L1243.7 311.3" fill="none" stroke="#e000e0" stroke-width="1"/>
</g>
<g clip-path="url(#cao)" shape-rendering="crispEdges">
<rect x="4" y="571" width="3" height="24" fill="#008000"/>
<rect x="12" y="571" width="3" height="20" fill="#008000"/>
<rect x="20" y="571" width="3" height="16" fill="#008000"/>
<rect x="28" y="571" width="3" height="15" fill="#008000"/>
<rect x="36" y="571" width="3" height="12" fill="#008000"/>
<rect x="44" y="571" width="3" height="8" fill="#008000"/>
<rect x="52" y="571" width="3" height="5" fill="#008000"/>
<rect x="60" y="571" width="3" height="4" fill="#008000"/>
<rect x="68" y="571" width="3" height="3" fill="#008000"/>
<rect x="92" y="568" width="3" height="1" fill="#008000"/>
<rect x="100" y="566" width="3" height="3" fill="#008000"/>
<rect x="108" y="563" width="3" height="6" fill="#008000"/>
<rect x="116" y="558" width="3" height="11" fill="#008000"/>
<rect x="124" y="550" width="3" height="19" fill="#008000"/>
<rect x="132" y="546" width="3" height="23" fill="#008000"/>
<rect x="140" y="540" width="3" height="29" fill="#008000"/>
<rect x="148" y="533" width="3" height="36" fill="#008000"/>
<rect x="156" y="530" width="3" height="39" fill="#008000"/>
<rect x="164" y="529" width="3" height="40" fill="#008000"/>
<rect x="172" y="527" width="3" height="42" fill="#008000"/>
<rect x="180" y="528" width="3" height="41" fill="#ff0000"/>
<rect x="188" y="530" width="3" height="39" fill="#ff0000"/>
<rect x="196" y="534" width="3" height="35" fill="#ff0000"/>
<rect x="204" y="539" width="3" height="30" fill="#ff0000"/>
<rect x="212" y="543" width="3" height="26" fill="#ff0000"/>
<rect x="220" y="546" width="3" height="23" fill="#ff0000"/>
<rect x="228" y="549" width="3" height="20" fill="#ff0000"/>
<rect x="236" y="549" width="3" height="20" fill="#008000"/>
<rect x="244" y="547" width="3" height="22" fill="#008000"/>
<rect x="252" y="546" width="3" height="23" fill="#008000"/>
<rect x="260" y="545" width="3" height="24" fill="#008000"/>
<rect x="268" y="545" width="3" height="24" fill="#008000"/>
<rect x="276" y="546" width="3" height="23" fill="#ff0000"/>
<rect x="284" y="548" width="3" height="21" fill="#ff0000"/>
<rect x="292" y="547" width="3" height="22" fill="#008000"/>
<rect x="300" y="541" width="3" height="28" fill="#008000"/>
<rect x="308" y="533" width="3" height="36" fill="#008000"/>
<rect x="316" y="528" width="3" height="41" fill="#008000"/>
<rect x="324" y="522" width="3" height="47" fill="#008000"/>
<rect x="332" y="520" width="3" height="49" fill="#008000"/>
<rect x="340" y="524" width="3" height="45" fill="#ff0000"/>
<rect x="348" y="528" width="3" height="41" fill="#ff0000"/>
<rect x="356" y="531" width="3" height="38" fill="#ff0000"/>
<rect x="364" y="533" width="3" height="36" fill="#ff0000"/>
<rect x="372" y="535" width="3" height="34" fill="#ff0000"/>
<rect x="380" y="536" width="3" height="33" fill="#ff0000"/>
<rect x="388" y="535" width="3" height="34" fill="#008000"/>
<rect x="396" y="532" width="3" height="37" fill="#008000"/>
<rect x="404" y="530" width="3" height="39" fill="#008000"/>
<rect x="412" y="527" width="3" height="42" fill="#008000"/>
<rect x="420" y="528" width="3" height="41" fill="#ff0000"/>
<rect x="428" y="531" width="3" height="38" fill="#ff0000"/>
<rect x="436" y="537" width="3" height="32" fill="#ff0000"/>
<rect x="444" y="545" width="3" height="24" fill="#ff0000"/>
<rect x="452" y="551" width="3" height="18" fill="#ff0000"/>
<rect x="460" y="555" width="3" height="14" fill="#ff0000"/>
<rect x="468" y="558" width="3" height="11" fill="#ff0000"/>
<rect x="476" y="557" width="3" height="12" fill="#008000"/>
<rect x="484" y="552" width="3" height="17" fill="#008000"/>
<rect x="492" y="550" width="3" height="19" fill="#008000"/>
<rect x="500" y="543" width="3" height="26" fill="#008000"/>
<rect x="508" y="535" width="3" height="34" fill="#008000"/>
<rect x="516" y="530" width="3" height="39" fill="#008000"/>
<rect x="524" y="527" width="3" height="42" fill="#008000"/>
<rect x="532" y="523" width="3" height="46" fill="#008000"/>
<rect x="540" y="527" width="3" height="42" fill="#ff0000"/>
<rect x="548" y="535" width="3" height="34" fill="#ff0000"/>
<rect x="556" y="542" width="3" height="27" fill="#ff0000"/>
<rect x="564" y="549" width="3" height="20" fill="#ff0000"/>
<rect x="572" y="555" width="3" height="14" fill="#ff0000"/>
<rect x="580" y="560" width="3" height="9" fill="#ff0000"/>
<rect x="588" y="563" width="3" height="6" fill="#ff0000"/>
<rect x="596" y="564" width="3" height="5" fill="#ff0000"/>
<rect x="604" y="564" width="3" height="5" fill="#ff0000"/>
<rect x="612" y="561" width="3" height="8" fill="#008000"/>
<rect x="620" y="558" width="3" height="11" fill="#008000"/>
<rect x="628" y="556" width="3" height="13" fill="#008000"/>
<rect x="636" y="552" width="3" height="17" fill="#008000"/>
<rect x="644" y="551" width="3" height="18" fill="#008000"/>
<rect x="652" y="553" width="3" height="16" fill="#ff0000"/>
<rect x="660" y="555" width="3" height="14" fill="#ff0000"/>
<rect x="668" y="557" width="3" height="12" fill="#ff0000"/>
<rect x="676" y="564" width="3" height="5" fill="#ff0000"/>
<rect x="692" y="571" width="3" height="4" fill="#ff0000"/>
<rect x="700" y="571" width="3" height="10" fill="#ff0000"/>
<rect x="708" y="571" width="3" height="15" fill="#ff0000"/>
<rect x="716" y="571" width="3" height="14" fill="#008000"/>
<rect x="724" y="571" width="3" height="12" fill="#008000"/>
<rect x="732" y="571" width="3" height="11" fill="#008000"/>
<rect x="740" y="571" width="3" height="9" fill="#008000"/>
<rect x="748" y="571" width="3" height="5" fill="#008000"/>
<rect x="764" y="568" width="3" height="1" fill="#008000"/>
<rect x="772" y="566" width="3" height="3" fill="#008000"/>
<rect x="780" y="562" width="3" height="7" fill="#008000"/>
<rect x="788" y="560" width="3" height="9" fill="#008000"/>
<rect x="796" y="561" width="3" height="8" fill="#ff0000"/>
<rect x="804" y="561" width="3" height="8" fill="#ff0000"/>
<rect x="812" y="561" width="3" height="8" fill="#008000"/>
<rect x="820" y="563" width="3" height="6" fill="#ff0000"/>
<rect x="828" y="564" width="3" height="5" fill="#ff0000"/>
<rect x="836" y="565" width="3" height="4" fill="#ff0000"/>
<rect x="844" y="560" width="3" height="9" fill="#008000"/>
<rect x="852" y="547" width="3" height="22" fill="#008000"/>
<rect x="860" y="538" width="3" height="31" fill="#008000"/>
<rect x="868" y="532" width="3" height="37" fill="#008000"/>
<rect x="876" y="526" width="3" height="43" fill="#008000"/>
<rect x="884" y="525" width="3" height="44" fill="#008000"/>
<rect x="892" y="533" width="3" height="36" fill="#ff0000"/>
<rect x="900" y="538" width="3" height="31" fill="#ff0000"/>
<rect x="908" y="539" width="3" height="30" fill="#ff0000"/>
<rect x="916" y="539" width="3" height="30" fill="#008000"/>
<rect x="924" y="541" width="3" height="28" fill="#ff0000"/>
<rect x="932" y="542" width="3" height="27" fill="#ff0000"/>
<rect x="940" y="544" width="3" height="25" fill="#ff0000"/>
<rect x="948" y="546" width="3" height="23" fill="#ff0000"/>
<rect x="956" y="548" width="3" height="21" fill="#ff0000"/>
<rect x="964" y="550" width="3" height="19" fill="#ff0000"/>
<rect x="972" y="550" width="3" height="19" fill="#ff0000"/>
<rect x="980" y="550" width="3" height="19" fill="#ff0000"/>
<rect x="988" y="552" width="3" height="17" fill="#ff0000"/>
<rect x="996" y="554" width="3" height="15" fill="#ff0000"/>
<rect x="1004" y="556" width="3" height="13" fill="#ff0000"/>
<rect x="1012" y="561" width="3" height="8" fill="#ff0000"/>
<rect x="1020" y="565" width="3" height="4" fill="#ff0000"/>
<rect x="1028" y="566" width="3" height="3" fill="#ff0000"/>
<rect x="1036" y="564" width="3" height="5" fill="#008000"/>
<rect x="1044" y="561" width="3" height="8" fill="#008000"/>
<rect x="1052" y="557" width="3" height="12" fill="#008000"/>
<rect x="1060" y="551" width="3" height="18" fill="#008000"/>
<rect x="1068" y="548" width="3" height="21" fill="#008000"/>
<rect x="1076" y="554" width="3" height="15" fill="#ff0000"/>
<rect x="1084" y="553" width="3" height="16" fill="#008000"/>
<rect x="1092" y="553" width="3" height="16" fill="#ff0000"/>
<rect x="1100" y="556" width="3" height="13" fill="#ff0000"/>
<rect x="1108" y="558" width="3" height="11" fill="#ff0000"/>
<rect x="1116" y="558" width="3" height="11" fill="#008000"/>
<rect x="1124" y="567" width="3" height="2" fill="#ff0000"/>
<rect x="1132" y="571" width="3" height="11" fill="#ff0000"/>
<rect x="1140" y="571" width="3" height="26" fill="#ff0000"/>
<rect x="1148" y="571" width="3" height="41" fill="#ff0000"/>
<rect x="1156" y="571" width="3" height="48" fill="#ff0000"/>
<rect x="1164" y="571" width="3" height="53" fill="#ff0000"/>
<rect x="1172" y="571" width="3" height="57" fill="#ff0000"/>
<rect x="1180" y="571" width="3" height="58" fill="#ff0000"/>
<rect x="1188" y="571" width="3" height="59" fill="#ff0000"/>
<rect x="1196" y="571" width="3" height="61" fill="#ff0000"/>
<rect x="1204" y="571" width="3" height="60" fill="#008000"/>
<rect x="1212" y="571" width="3" height="56" fill="#008000"/>
<rect x="1220" y="571" width="3" height="49" fill="#008000"/>
<rect x="1228" y="571" width="3" height="42" fill="#008000"/>
<rect x="1236" y="571" width="3" height="42" fill="#008000"/>
<rect x="1244" y="571" width="3" height="40" fill="#008000"/>
<rect x="1252" y="571" width="3" height="40" fill="#008000"/>
<rect x="1260" y="571" width="3" height="43" fill="#ff0000"/>
<rect x="1268" y="571" width="3" height="45" fill="#ff0000"/>
<rect x="1276" y="571" width="3" height="43" fill="#008000"/>
<rect x="1284" y="571" width="3" height="42" fill="#008000"/>
<rect x="1292" y="571" width="3" height="41" fill="#008000"/>
<rect x="1300" y="571" width="3" height="40" fill="#008000"/>
</g>
<g clip-path="url(#cac)" shape-rendering="crispEdges">
<rect x="4" y="674" width="3" height="13" fill="#008000"/>
<rect x="12" y="670" width="3" height="17" fill="#008000"/>
<rect x="20" y="670" width="3" height="17" fill="#ff0000"/>
<rect x="28" y="673" width="3" height="14" fill="#ff0000"/>
<rect x="36" y="674" width="3" height="13" fill="#ff0000"/>
<rect x="44" y="672" width="3" height="15" fill="#008000"/>
<rect x="52" y="673" width="3" height="14" fill="#ff0000"/>
<rect x="60" y="676" width="3" height="11" fill="#ff0000"/>
<rect x="68" y="679" width="3" height="8" fill="#ff0000"/>
<rect x="76" y="681" width="3" height="6" fill="#ff0000"/>
<rect x="84" y="684" width="3" height="3" fill="#ff0000"/>
<rect x="92" y="680" width="3" height="7" fill="#008000"/>
<rect x="100" y="679" width="3" height="8" fill="#008000"/>
<rect x="108" y="677" width="3" height="10" fill="#008000"/>
<rect x="116" y="670" width="3" height="17" fill="#008000"/>
<rect x="124" y="660" width="3" height="27" fill="#008000"/>
<rect x="132" y="662" width="3" height="25" fill="#ff0000"/>
<rect x="140" y="659" width="3" height="28" fill="#008000"/>
<rect x="148" y="657" width="3" height="30" fill="#008000"/>
<rect x="156" y="663" width="3" height="24" fill="#ff0000"/>
<rect x="164" y="673" width="3" height="14" fill="#ff0000"/>
<rect x="172" y="676" width="3" height="11" fill="#ff0000"/>
<rect x="180" y="684" width="3" height="3" fill="#ff0000"/>
<rect x="188" y="689" width="3" height="4" fill="#ff0000"/>
<rect x="196" y="689" width="3" height="12" fill="#ff0000"/>
<rect x="204" y="689" width="3" height="19" fill="#ff0000"/>
<rect x="212" y="689" width="3" height="21" fill="#ff0000"/>
<rect x="220" y="689" width="3" height="20" fill="#008000"/>
<rect x="228" y="689" width="3" height="18" fill="#008000"/>
<rect x="236" y="689" width="3" height="10" fill="#008000"/>
<rect x="244" y="689" width="3" height="2" fill="#008000"/>
<rect x="252" y="684" width="3" height="3" fill="#008000"/>
<rect x="260" y="682" width="3" height="5" fill="#008000"/>
<rect x="268" y="684" width="3" height="3" fill="#ff0000"/>
<rect x="276" y="689" width="3" height="2" fill="#ff0000"/>
<rect x="284" y="689" width="3" height="7" fill="#ff0000"/>
<rect x="292" y="689" width="3" height="2" fill="#008000"/>
<rect x="300" y="677" width="3" height="10" fill="#008000"/>
<rect x="308" y="664" width="3" height="23" fill="#008000"/>
<rect x="316" y="658" width="3" height="29" fill="#008000"/>
<rect x="324" y="658" width="3" height="29" fill="#008000"/>
<rect x="332" y="666" width="3" height="21" fill="#ff0000"/>
<rect x="340" y="684" width="3" height="3" fill="#ff0000"/>
<rect x="348" y="689" width="3" height="10" fill="#ff0000"/>
<rect x="356" y="689" width="3" height="16" fill="#ff0000"/>
<rect x="364" y="689" width="3" height="15" fill="#008000"/>
<rect x="372" y="689" width="3" height="14" fill="#008000"/>
<rect x="380" y="689" width="3" height="9" fill="#008000"/>
<rect x="388" y="689" width="3" height="3" fill="#008000"/>
<rect x="396" y="683" width="3" height="4" fill="#008000"/>
<rect x="404" y="679" width="3" height="8" fill="#008000"/>
<rect x="412" y="676" width="3" height="11" fill="#008000"/>
<rect x="420" y="682" width="3" height="5" fill="#ff0000"/>
<rect x="428" y="689" width="3" height="4" fill="#ff0000"/>
<rect x="436" y="689" width="3" height="16" fill="#ff0000"/>
<rect x="444" y="689" width="3" height="29" fill="#ff0000"/>
<rect x="452" y="689" width="3" height="34" fill="#ff0000"/>
<rect x="460" y="689" width="3" height="30" fill="#008000"/>
<rect x="468" y="689" width="3" height="23" fill="#008000"/>
<rect x="476" y="689" width="3" height="10" fill="#008000"/>
<rect x="484" y="682" width="3" height="5" fill="#008000"/>
<rect x="492" y="677" width="3" height="10" fill="#008000"/>
<rect x="500" y="666" width="3" height="21" fill="#008000"/>
<rect x="508" y="656" width="3" height="31" fill="#008000"/>
<rect x="516" y="657" width="3" height="30" fill="#ff0000"/>
<rect x="524" y="663" width="3" height="24" fill="#ff0000"/>
<rect x="532" y="667" width="3" height="20" fill="#ff0000"/>
<rect x="540" y="685" width="3" height="2" fill="#ff0000"/>
<rect x="548" y="689" width="3" height="17" fill="#ff0000"/>
<rect x="556" y="689" width="3" height="28" fill="#ff0000"/>
<rect x="564" y="689" width="3" height="35" fill="#ff0000"/>
<rect x="572" y="689" width="3" height="34" fill="#008000"/>
<rect x="580" y="689" width="3" height="30" fill="#008000"/>
<rect x="588" y="689" width="3" height="24" fill="#008000"/>
<rect x="596" y="689" width="3" height="17" fill="#008000"/>
<rect x="604" y="689" width="3" height="9" fill="#008000"/>
<rect x="612" y="684" width="3" height="3" fill="#008000"/>
<rect x="620" y="678" width="3" height="9" fill="#008000"/>
<rect x="628" y="675" width="3" height="12" fill="#008000"/>
<rect x="636" y="673" width="3" height="14" fill="#008000"/>
<rect x="644" y="676" width="3" height="11" fill="#ff0000"/>
<rect x="652" y="686" width="3" height="1" fill="#ff0000"/>
<rect x="660" y="689" width="3" height="4" fill="#ff0000"/>
<rect x="668" y="689" width="3" height="10" fill="#ff0000"/>
<rect x="676" y="689" width="3" height="20" fill="#ff0000"/>
<rect x="684" y="689" width="3" height="25" fill="#ff0000"/>
<rect x="692" y="689" width="3" height="25" fill="#008000"/>
<rect x="700" y="689" width="3" height="28" fill="#ff0000"/>
<rect x="708" y="689" width="3" height="26" fill="#008000"/>
<rect x="716" y="689" width="3" height="14" fill="#008000"/>
<rect x="724" y="689" width="3" height="3" fill="#008000"/>
<rect x="732" y="684" width="3" height="3" fill="#008000"/>
<rect x="740" y="679" width="3" height="8" fill="#008000"/>
<rect x="748" y="675" width="3" height="12" fill="#008000"/>
<rect x="756" y="672" width="3" height="15" fill="#008000"/>
<rect x="764" y="673" width="3" height="14" fill="#ff0000"/>
<rect x="772" y="675" width="3" height="12" fill="#ff0000"/>
<rect x="780" y="673" width="3" height="14" fill="#008000"/>
<rect x="788" y="675" width="3" height="12" fill="#ff0000"/>
<rect x="796" y="681" width="3" height="6" fill="#ff0000"/>
<rect x="804" y="686" width="3" height="1" fill="#ff0000"/>
<rect x="820" y="689" width="3" height="4" fill="#ff0000"/>
<rect x="828" y="689" width="3" height="5" fill="#ff0000"/>
<rect x="836" y="689" width="3" height="7" fill="#ff0000"/>
<rect x="844" y="682" width="3" height="5" fill="#008000"/>
<rect x="852" y="657" width="3" height="30" fill="#008000"/>
<rect x="860" y="645" width="3" height="42" fill="#008000"/>
<rect x="868" y="646" width="3" height="41" fill="#ff0000"/>
<rect x="876" y="652" width="3" height="35" fill="#ff0000"/>
<rect x="884" y="667" width="3" height="20" fill="#ff0000"/>
<rect x="892" y="689" width="3" height="6" fill="#ff0000"/>
<rect x="900" y="689" width="3" height="18" fill="#ff0000"/>
<rect x="908" y="689" width="3" height="18" fill="#ff0000"/>
<rect x="916" y="689" width="3" height="12" fill="#008000"/>
<rect x="924" y="689" width="3" height="9" fill="#008000"/>
<rect x="932" y="689" width="3" height="7" fill="#008000"/>
<rect x="940" y="689" width="3" height="8" fill="#ff0000"/>
<rect x="948" y="689" width="3" height="9" fill="#ff0000"/>
<rect x="956" y="689" width="3" height="11" fill="#ff0000"/>
<rect x="964" y="689" width="3" height="10" fill="#008000"/>
<rect x="972" y="689" width="3" height="7" fill="#008000"/>
<rect x="980" y="689" width="3" height="5" fill="#008000"/>
<rect x="988" y="689" width="3" height="7" fill="#ff0000"/>
<rect x="996" y="689" width="3" height="7" fill="#ff0000"/>
<rect x="1004" y="689" width="3" height="10" fill="#ff0000"/>
<rect x="1012" y="689" width="3" height="17" fill="#ff0000"/>
<rect x="1020" y="689" width="3" height="19" fill="#ff0000"/>
<rect x="1028" y="689" width="3" height="15" fill="#008000"/>
<rect x="1036" y="689" width="3" height="4" fill="#008000"/>
<rect x="1044" y="682" width="3" height="5" fill="#008000"/>
<rect x="1052" y="674" width="3" height="13" fill="#008000"/>
<rect x="1060" y="667" width="3" height="20" fill="#008000"/>
<rect x="1068" y="668" width="3" height="19" fill="#ff0000"/>
<rect x="1076" y="686" width="3" height="1" fill="#ff0000"/>
<rect x="1084" y="689" width="3" height="2" fill="#ff0000"/>
<rect x="1092" y="689" width="3" height="5" fill="#ff0000"/>
<rect x="1100" y="689" width="3" height="9" fill="#ff0000"/>
<rect x="1108" y="689" width="3" height="10" fill="#ff0000"/>
<rect x="1116" y="689" width="3" height="6" fill="#008000"/>
<rect x="1124" y="689" width="3" height="23" fill="#ff0000"/>
<rect x="1132" y="689" width="3" height="41" fill="#ff0000"/>
<rect x="1140" y="689" width="3" height="60" fill="#ff0000"/>
<rect x="1148" y="689" width="3" height="70" fill="#ff0000"/>
<rect x="1156" y="689" width="3" height="59" fill="#008000"/>
<rect x="1164" y="689" width="3" height="44" fill="#008000"/>
<rect x="1172" y="689" width="3" height="31" fill="#008000"/>
<rect x="1180" y="689" width="3" height="17" fill="#008000"/>
<rect x="1188" y="689" width="3" height="12" fill="#008000"/>
<rect x="1196" y="689" width="3" height="9" fill="#008000"/>
<rect x="1204" y="689" width="3" height="4" fill="#008000"/>
<rect x="1212" y="681" width="3" height="6" fill="#008000"/>
<rect x="1220" y="666" width="3" height="21" fill="#008000"/>
<rect x="1228" y="659" width="3" height="28" fill="#008000"/>
<rect x="1236" y="668" width="3" height="19" fill="#ff0000"/>
<rect x="1244" y="675" width="3" height="12" fill="#ff0000"/>
<rect x="1252" y="681" width="3" height="6" fill="#ff0000"/>
<rect x="1260" y="689" width="3" height="5" fill="#ff0000"/>
<rect x="1268" y="689" width="3" height="8" fill="#ff0000"/>
<rect x="1276" y="689" width="3" height="3" fill="#008000"/>
<rect x="1292" y="683" width="3" height="4" fill="#008000"/>
<rect x="1300" y="683" width="3" height="4" fill="#008000"/>
</g>
<g shape-rendering="crispEdges"><rect x="1652" y="46" width="4" height="1" fill="#fff"/>
<text x="1657" y="50" font-size="9.6" fill="#fff">24.170</text>
<rect x="1652" y="79" width="4" height="1" fill="#fff"/>
<text x="1657" y="83" font-size="9.6" fill="#fff">24.020</text>
<rect x="1652" y="112" width="4" height="1" fill="#fff"/>
<text x="1657" y="116" font-size="9.6" fill="#fff">23.865</text>
<rect x="1652" y="145" width="4" height="1" fill="#fff"/>
<text x="1657" y="149" font-size="9.6" fill="#fff">23.715</text>
<rect x="1652" y="178" width="4" height="1" fill="#fff"/>
<text x="1657" y="182" font-size="9.6" fill="#fff">23.560</text>
<rect x="1652" y="211" width="4" height="1" fill="#fff"/>
<text x="1657" y="215" font-size="9.6" fill="#fff">23.405</text>
<rect x="1652" y="244" width="4" height="1" fill="#fff"/>
<text x="1657" y="248" font-size="9.6" fill="#fff">23.255</text>
<rect x="1652" y="277" width="4" height="1" fill="#fff"/>
<text x="1657" y="281" font-size="9.6" fill="#fff">23.100</text>
<rect x="1652" y="310" width="4" height="1" fill="#fff"/>
<text x="1657" y="314" font-size="9.6" fill="#fff">22.950</text>
<rect x="1652" y="343" width="4" height="1" fill="#fff"/>
<text x="1657" y="347" font-size="9.6" fill="#fff">22.795</text>
<rect x="1652" y="376" width="4" height="1" fill="#fff"/>
<text x="1657" y="380" font-size="9.6" fill="#fff">22.645</text>
<rect x="1652" y="409" width="4" height="1" fill="#fff"/>
<text x="1657" y="413" font-size="9.6" fill="#fff">22.490</text>
<rect x="1652" y="442" width="4" height="1" fill="#fff"/>
<text x="1657" y="446" font-size="9.6" fill="#fff">22.335</text>
<rect x="1652" y="475" width="4" height="1" fill="#fff"/>
<text x="1657" y="479" font-size="9.6" fill="#fff">22.185</text>
<rect x="1652" y="508" width="4" height="1" fill="#fff"/>
<text x="1657" y="512" font-size="9.6" fill="#fff">22.030</text>
<rect x="5" y="300" width="1646" height="1" fill="#778899"/>
<rect x="1653" y="295" width="33" height="11" fill="#fff"/>
<text x="1657" y="304" font-size="9.6" fill="#000">22.993</text>
<rect x="1654" y="516" width="30" height="10" fill="#008000"/>
<text x="1656" y="524.5" font-size="9.4" fill="#fff">0.4416</text>
<rect x="1654" y="565" width="20" height="11" fill="#008000"/>
<text x="1656" y="574" font-size="9.4" fill="#fff">0.00</text>
<rect x="1654" y="624" width="33" height="10" fill="#008000"/>
<text x="1655" y="632.5" font-size="9.4" fill="#fff">-0.5202</text>
<rect x="1654" y="641" width="33" height="10" fill="#008000"/>
<text x="1655" y="649.5" font-size="9.4" fill="#fff">0.15363</text>
<rect x="1654" y="683" width="20" height="11" fill="#008000"/>
<text x="1656" y="692" font-size="9.4" fill="#fff">0.00</text>
<rect x="1654" y="751" width="33" height="10" fill="#008000"/>
<text x="1655" y="759.5" font-size="9.4" fill="#fff">-0.2366</text>
<path d="M1315.5 35 h10 l-5 5z" fill="#8898aa"/>
<rect x="5" y="764" width="1" height="4" fill="#fff"/>
<text x="4" y="776" font-size="9.6" fill="#fff">7 Dec 2022</text>
<rect x="69" y="764" width="1" height="4" fill="#fff"/>
<text x="68" y="776" font-size="9.6" fill="#fff">7 Dec 08:00</text>
<rect x="133" y="764" width="1" height="4" fill="#fff"/>
<text x="132" y="776" font-size="9.6" fill="#fff">7 Dec 16:00</text>
<rect x="197" y="764" width="1" height="4" fill="#fff"/>
<text x="196" y="776" font-size="9.6" fill="#fff">8 Dec 01:00</text>
<rect x="261" y="764" width="1" height="4" fill="#fff"/>
<text x="260" y="776" font-size="9.6" fill="#fff">8 Dec 09:00</text>
<rect x="325" y="764" width="1" height="4" fill="#fff"/>
<text x="324" y="776" font-size="9.6" fill="#fff">8 Dec 17:00</text>
<rect x="389" y="764" width="1" height="4" fill="#fff"/>
<text x="388" y="776" font-size="9.6" fill="#fff">9 Dec 02:00</text>
<rect x="453" y="764" width="1" height="4" fill="#fff"/>
<text x="452" y="776" font-size="9.6" fill="#fff">9 Dec 10:00</text>
<rect x="517" y="764" width="1" height="4" fill="#fff"/>
<text x="516" y="776" font-size="9.6" fill="#fff">9 Dec 18:00</text>
<rect x="581" y="764" width="1" height="4" fill="#fff"/>
<text x="580" y="776" font-size="9.6" fill="#fff">12 Dec 03:00</text>
<rect x="645" y="764" width="1" height="4" fill="#fff"/>
<text x="644" y="776" font-size="9.6" fill="#fff">12 Dec 11:00</text>
<rect x="709" y="764" width="1" height="4" fill="#fff"/>
<text x="708" y="776" font-size="9.6" fill="#fff">12 Dec 19:00</text>
<rect x="773" y="764" width="1" height="4" fill="#fff"/>
<text x="772" y="776" font-size="9.6" fill="#fff">13 Dec 04:00</text>
<rect x="837" y="764" width="1" height="4" fill="#fff"/>
<text x="836" y="776" font-size="9.6" fill="#fff">13 Dec 12:00</text>
<rect x="901" y="764" width="1" height="4" fill="#fff"/>
<text x="900" y="776" font-size="9.6" fill="#fff">13 Dec 20:00</text>
<rect x="965" y="764" width="1" height="4" fill="#fff"/>
<text x="964" y="776" font-size="9.6" fill="#fff">14 Dec 05:00</text>
<rect x="1029" y="764" width="1" height="4" fill="#fff"/>
<text x="1028" y="776" font-size="9.6" fill="#fff">14 Dec 13:00</text>
<rect x="1093" y="764" width="1" height="4" fill="#fff"/>
<text x="1092" y="776" font-size="9.6" fill="#fff">14 Dec 21:00</text>
<rect x="1157" y="764" width="1" height="4" fill="#fff"/>
<text x="1156" y="776" font-size="9.6" fill="#fff">15 Dec 06:00</text>
<rect x="1221" y="764" width="1" height="4" fill="#fff"/>
<text x="1220" y="776" font-size="9.6" fill="#fff">15 Dec 14:00</text>
<rect x="1285" y="764" width="1" height="4" fill="#fff"/>
<text x="1284" y="776" font-size="9.6" fill="#fff">15 Dec 23:01</text>
<rect x="5" y="569" width="1649" height="2" fill="#c0c0c0"/>
<rect x="5" y="687" width="1649" height="2" fill="#c0c0c0"/>
<rect x="7" y="517" width="58" height="11" fill="#008000"/>
<text x="9" y="526" font-size="9.6" fill="#fff">AO -0.3109</text>
<rect x="7" y="642" width="58" height="11" fill="#008000"/>
<text x="9" y="651" font-size="9.6" fill="#fff">AC 0.01625</text>
<path d="M8 45 l3.5 -4 3.5 4z" fill="#fff"/>
<text x="20" y="46" font-size="9.4" fill="#fff" xml:space="preserve">SILVER,H1  23.092 23.139 22.928 22.993</text></g>
<defs><linearGradient id="gbtn" x1="0" y1="0" x2="0" y2="1"><stop offset="0" stop-color="#5c5cff"/><stop offset="1" stop-color="#2c2cf0"/></linearGradient><linearGradient id="gbig" x1="0" y1="0" x2="0" y2="1"><stop offset="0" stop-color="#2424e8"/><stop offset="1" stop-color="#0000b4"/></linearGradient><linearGradient id="ggray" x1="0" y1="0" x2="0" y2="1"><stop offset="0" stop-color="#f4f4f4"/><stop offset="1" stop-color="#d4d4d4"/></linearGradient></defs>
<rect x="8" y="54" width="51" height="24" fill="url(#gbtn)"/>
<rect x="176" y="54" width="51" height="24" fill="url(#gbtn)"/>
<rect x="8" y="78" width="109" height="33" fill="url(#gbig)"/>
<rect x="119" y="78" width="108" height="33" fill="url(#gbig)"/>
<rect x="12" y="77.5" width="44" height="1" fill="#7a7aff"/><rect x="179" y="77.5" width="44" height="1" fill="#7a7aff"/>
<rect x="62" y="54" width="111" height="22" fill="#fff"/>
<rect x="62.5" y="54.5" width="21" height="21" fill="url(#ggray)" stroke="#b8b8b8"/>
<rect x="152.5" y="54.5" width="20" height="21" fill="url(#ggray)" stroke="#b8b8b8"/>
<path d="M70 63.5h5l-2.5 2.5z" fill="#5a70b0"/><path d="M160 66h5l-2.5-2.5z" fill="#5a70b0"/>
<text x="148" y="68.5" font-size="11.5" text-anchor="end" fill="#000">4.00</text>
<text x="33.5" y="70" font-size="10.8" text-anchor="middle" fill="#fff">SELL</text>
<text x="200.5" y="70" font-size="11.5" text-anchor="middle" fill="#fff">BUY</text>
<text x="38" y="105.5" font-size="11" font-weight="bold" fill="#fff">22</text>
<text x="54.5" y="106" font-size="33.5" fill="#fff" letter-spacing="-1.6">99</text>
<text x="95" y="90.3" font-size="10" font-weight="bold" fill="#fff">1</text>
<text x="148" y="105.5" font-size="11" font-weight="bold" fill="#fff">23</text>
<text x="165.5" y="106" font-size="33.5" fill="#fff" letter-spacing="-1.6">02</text>
<text x="206" y="90.3" font-size="10" font-weight="bold" fill="#fff">5</text>
<text x="9" y="120" font-size="9.2" fill="#fff">4 minutes 29 seconds left to bar end</text>
<g stroke="#ffffff" stroke-width="1.15" fill="none" stroke-linecap="square">
<path d="M1131.7 469.2h14.7v16.4h-14.7zM1131.7 476.8h14.7"/>
<path d="M1155.4 468.5l2.8 2.6M1153.5 473.2l3.3 2.7M1153.3 481.5h2.5l0.5 0M1156.3 486.3l3-7"/>
<path d="M1161.5 471.6h14.3l-1.2 2.5M1168.9 468.3v10.5M1161.5 471.6v5q-0.5 6-4 9.5M1162.5 476.5h11.5l-14.5 9.8M1164 478l12.7 7.8"/>
<path d="M1184.3 468.3v18.5M1180.5 473v10h7.6v-10zM1190 470.2h12M1191.4 473.5h9v3.3h-9zM1190 478.7h11.4v7.1h-11.4zM1190 482.2h11.4M1195.7 478.7v7.1"/>
<path d="M1515.9 468.4l-11.6 10.2M1515.9 468.4l11.2 8.2M1514.5 474.5l1.5 1.5M1508.6 480h13.6l-6.8 6.8"/>
<path d="M1533 470.3h18.4M1531 476.6h22.4M1542.2 470.3v6.3q0 6-11.7 10.2M1542.7 477q3 5 10.7 8.4"/>
</g>
<text class="mono" x="1216.5" y="486" font-size="21.5" fill="#fff" xml:space="preserve">= 74.5  (30 days)</text>
<text class="mono" x="1568" y="486" font-size="21.5" fill="#fff" xml:space="preserve">= 21.1</text>
<path d="M1379.7 311.5h6.2M1388.2 311.5h5.7M1396.5 311.5h5.5" stroke="#f0f000" stroke-width="1"/><rect x="1409.5" y="308.5" width="1.5" height="1.5" fill="#f0f000"/>
<text x="1414.5" y="315.5" font-size="14" fill="#f0f000">20</text>
<g fill="none" stroke="#fff" stroke-linecap="round" stroke-linejoin="round">
<path d="M3.0 498.0 L57.0 463.0 L180.0 376.0 L340.0 272.0 L515.5 152.0" stroke-width="6.0"/>
<path d="M490.0 157.0 L515.5 152.0 L500.5 171.5" stroke-width="6.5"/>
<path d="M515.5 152.0 L678.6 290.5" stroke-width="6.0"/>
<path d="M655.0 282.5 L678.6 290.5 L666.0 269.5" stroke-width="6.5"/>
<path d="M678.6 290.5 L864.4 49.5" stroke-width="6.0"/>
<path d="M840.5 62.5 L864.4 49.5 L856.6 73.0" stroke-width="6.5"/>
<path d="M863.5 48.5 L1072.0 232.0" stroke-width="6.8"/>
<path d="M1072.4 232.0 L1092.3 70.0" stroke-width="6.0"/>
<path d="M1083.5 71.5 L1092.3 70.0" stroke-width="4"/>
<path d="M1092.3 69.0 L1331.5 364.0" stroke-width="6.5"/>
<path d="M1312.0 354.0 L1333.0 364.5 L1326.6 342.6" stroke-width="8"/>
<path d="M1333.0 364.5 L1467.4 180.6" stroke-width="8.5"/>
<path d="M1445.0 195.4 L1467.4 180.6 L1458.7 206.6" stroke-width="6.5"/>
<path d="M1467.4 180.6 L1592.3 519.0" stroke-width="6.0"/>
<path d="M1576.1 500.2 L1592.3 519.0 L1592.7 494.0" stroke-width="6.5"/>
<path d="M226.9 225.5 L232.1 223.8 L239.0 223.5 L263.6 223.5 L269.4 230.6 L269.4 237.5 L261.9 241.5 L255.0 246.0 L236.7 249.0 L234.4 250.0 L255.0 250.4 L259.6 250.7 L265.4 255.9 L266.5 261.6 L266.5 277.6 L258.5 285.1 L232.1 285.1 L222.9 284.0 L215.5 278.2" stroke-width="6.5"/>
<path d="M541.7 234.7 L540.0 248.0 L531.6 262.0 L517.6 280.5" stroke-width="6.3"/>
<path d="M517.6 281.0 L597.5 278.2" stroke-width="6.3"/>
<path d="M573.0 241.0 L570.9 266.0 L563.9 290.0 L561.8 308.3" stroke-width="6.3"/>
<path d="M739.4 76.8 L739.1 92.2 L737.3 106.2 L730.3 118.1 L734.5 119.5 L756.2 119.5 L766.0 127.3 L771.6 135.7 L770.2 144.1 L763.2 151.1 L752.0 156.7 L745.0 160.2 L722.6 160.2 L719.8 156.7" stroke-width="6.3"/>
<path d="M740.1 92.2 L778.7 92.2" stroke-width="6.3"/>
<path d="M875.4 233.8 L885.2 212.8 L895.0 189.0 L907.6 168.0 L916.0 155.4 L921.6 168.0 L930.0 190.4 L935.6 205.8 L942.6 233.8" stroke-width="6.2"/>
<path d="M902.7 198.1 L937.7 197.4" stroke-width="6.5"/>
<path d="M1027.2 66.4 L1028.0 90.0 L1028.3 108.8 L1023.8 112.2" stroke-width="6.3"/>
<path d="M1031.8 56.0 L1052.4 54.9 L1058.2 60.6 L1057.0 68.7 L1050.1 74.4 L1039.8 80.1 L1038.7 82.4 L1039.8 83.6 L1058.2 83.6 L1073.0 89.3 L1077.7 95.0 L1074.2 101.9 L1063.9 110.0 L1053.6 113.4 L1033.0 113.4 L1023.8 112.2" stroke-width="6.3"/>
<path d="M1309.4 157.7 L1292.4 153.1 L1270.8 146.2 L1261.6 150.0 L1257.0 160.8 L1256.2 174.7 L1257.0 190.1 L1264.7 196.3 L1286.2 201.7 L1307.8 201.7 L1316.3 198.6" stroke-width="7.0"/>
<path d="M1341.7 179.5 L1367.9 175.0 L1446.0 175.5" stroke-width="6.3"/>
<path d="M1434.3 161.2 L1460.3 173.0 L1435.3 190.8" stroke-width="6.3"/>
<path d="M1499.5 137.0 L1525.9 137.0 L1529.3 142.2 L1529.3 153.7 L1520.1 161.7 L1511.0 167.4 L1502.4 172.0 L1510.0 169.7 L1540.8 169.7 L1547.1 174.3 L1547.1 182.3 L1539.6 192.6 L1531.6 200.1 L1512.1 207.0 L1497.2 207.0 L1492.6 204.1" stroke-width="6.3"/>
<path d="M1397.7 318.0 L1449.0 317.3" stroke-width="6.3"/>
<path d="M1433.0 283.7 L1432.0 310.5 L1424.5 341.0" stroke-width="6.3"/>
<path d="M1561.2 287.2 L1558.9 314.7" stroke-width="6.3"/>
<path d="M1563.0 291.0 L1608.8 286.1" stroke-width="6.3"/>
<path d="M1560.0 314.7 L1602.5 314.7 L1607.1 319.3 L1607.1 330.8 L1599.6 337.6 L1585.9 342.2 L1569.8 343.4 L1565.8 339.9" stroke-width="6.3"/>
<path d="M1416.3 272.6 Q1422 291 1396.5 317.5" stroke-width="6.3"/>
</g>
<rect x="1540" y="512" width="100" height="1" fill="#000"/>
</svg></body></html>
